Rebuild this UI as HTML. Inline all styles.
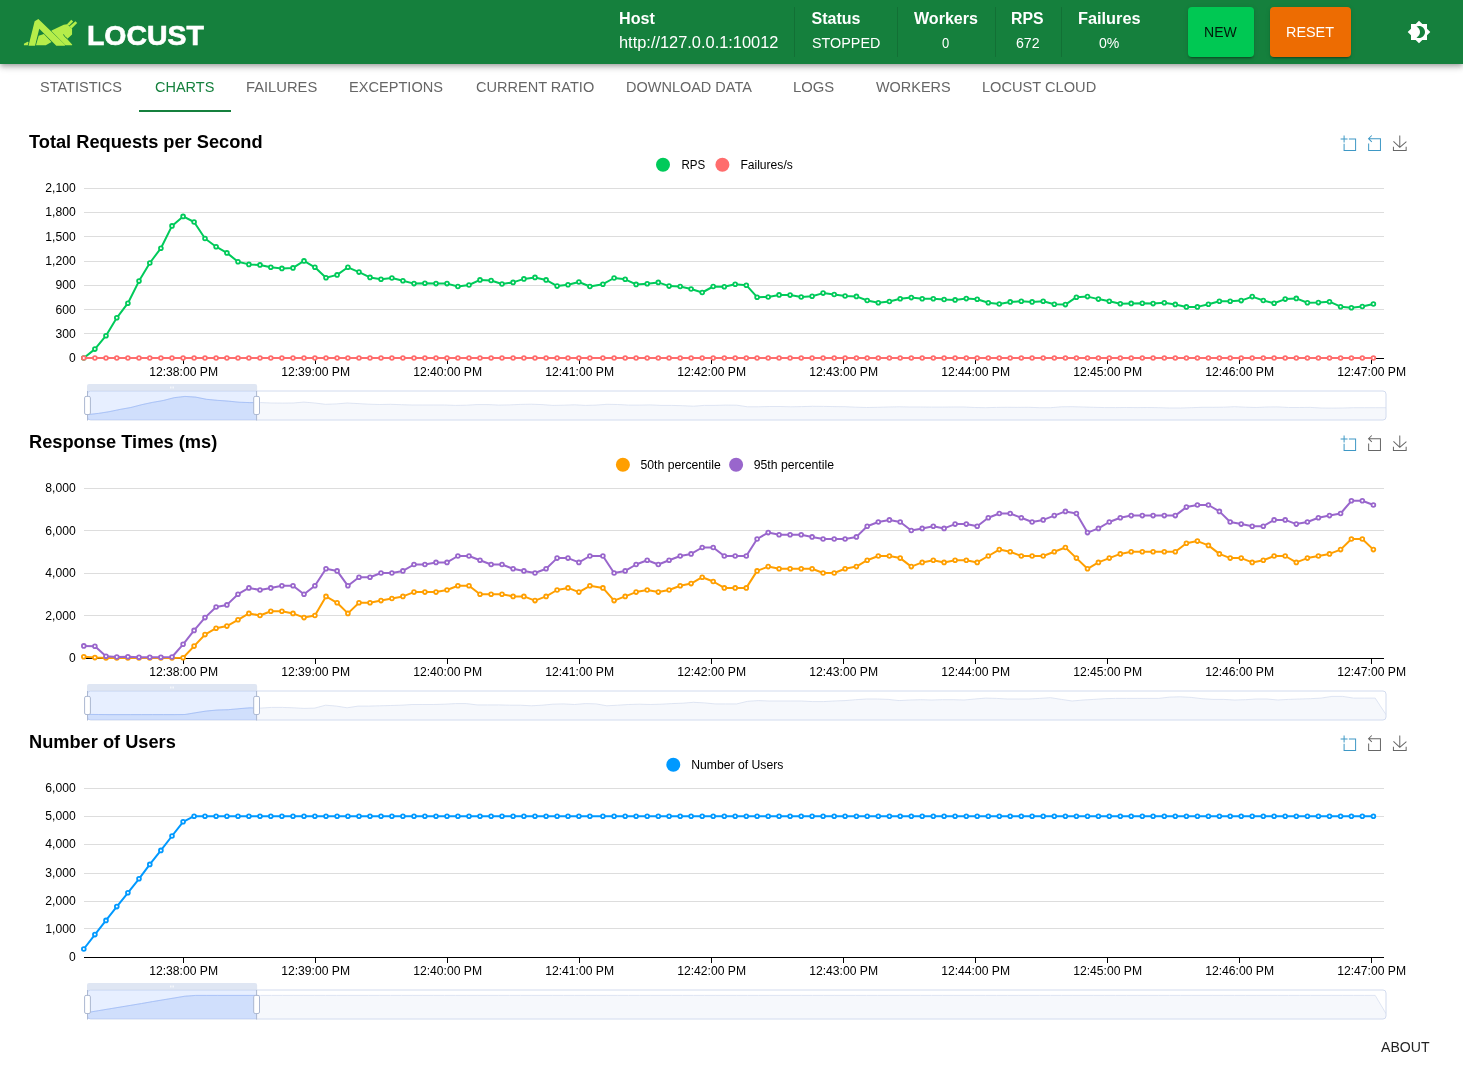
<!DOCTYPE html>
<html lang="en"><head><meta charset="utf-8"><title>Locust</title>
<style>
html,body{margin:0;padding:0;background:#fff;}
body{width:1463px;height:1068px;position:relative;overflow:hidden;font-family:"Liberation Sans", Arial, Helvetica, sans-serif;}
.t{position:absolute;white-space:nowrap;line-height:1;transform-origin:0 0;display:block;}
header{position:absolute;left:0;top:0;width:1463px;height:64px;background:#15803d;
 box-shadow:0 2px 4px -1px rgba(0,0,0,.2),0 4px 5px 0 rgba(0,0,0,.14),0 1px 10px 0 rgba(0,0,0,.12);}
.gl{position:absolute;left:0;top:0;width:1463px;height:1068px;will-change:transform;pointer-events:none;}
header .gl{height:64px;}
.dv{position:absolute;top:7px;width:1px;height:50px;background:rgba(0,0,0,.12);}
.btn{position:absolute;top:7px;height:50px;border-radius:4px;
 box-shadow:0 3px 1px -2px rgba(0,0,0,.2),0 2px 2px 0 rgba(0,0,0,.14),0 1px 5px 0 rgba(0,0,0,.12);}
nav .ind{position:absolute;left:139px;top:110px;width:92px;height:2px;background:#15803d;}
svg text{font-family:"Liberation Sans", Arial, Helvetica, sans-serif;}
</style></head>
<body>
<header>
<div class="gl">
<svg style="position:absolute;left:0;top:0" width="100" height="64" viewBox="0 0 100 64"><g fill="#b5ed4a"><path d="M23.94,43.83 L27.52,41.65 L28.57,42.00 L27.79,45.15 L23.94,45.15 Z"/><path d="M28.53,45.80 L34.65,21.35 L38.37,19.07 L65.28,44.97 L64.71,45.80 L56.31,45.80 L39.25,28.87 L35.09,45.80 Z"/><path d="M38.68,35.74 L43.84,34.04 L51.50,42.00 L45.81,45.15 L35.97,45.15 Z"/><path d="M51.58,30.62 L63.75,24.72 L67.03,24.19 L72.06,28.65 L72.06,34.56 L67.46,38.80 L65.71,37.40 L72.14,44.40 L72.14,45.15 L65.58,45.15 L51.58,31.37 Z"/><path d="M66.81,24.41 L71.27,19.82 L73.15,21.44 L69.00,25.72 Z"/><path d="M69.35,26.38 L75.47,21.35 L77.18,22.97 L71.71,28.52 Z"/></g><path d="M63.53,34.34 Q63.96,36.75 67.33,38.59" fill="none" stroke="#15803d" stroke-width="0.9"/></svg>
<span class="t" style="left:87.14px;top:22.51px;font-size:26.8px;font-weight:700;color:#fff;-webkit-text-stroke:0.6px #fff;transform:scaleX(1.0602)">LOCUST</span>
<span class="t" style="left:618.59px;top:11.36px;font-size:16px;font-weight:700;color:#fff;transform:scaleX(1.0078)">Host</span><span class="t" style="left:618.58px;top:35.16px;font-size:16px;font-weight:400;color:#fff;transform:scaleX(1.0240)">http://127.0.0.1:10012</span>
<div class="dv" style="left:794px"></div>
<span class="t" style="left:811.60px;top:11.36px;font-size:16px;font-weight:700;color:#fff;transform:scaleX(1.0000)">Status</span><span class="t" style="left:811.60px;top:35.95px;font-size:14px;font-weight:400;color:#fff;transform:scaleX(1.0249)">STOPPED</span>
<div class="dv" style="left:897px"></div>
<span class="t" style="left:914.20px;top:11.36px;font-size:16px;font-weight:700;color:#fff;transform:scaleX(1.0026)">Workers</span><span class="t" style="left:942.20px;top:35.95px;font-size:14px;font-weight:400;color:#fff;transform:scaleX(0.9250)">0</span>
<div class="dv" style="left:995px"></div>
<span class="t" style="left:1011.41px;top:11.36px;font-size:16px;font-weight:700;color:#fff;transform:scaleX(0.9868)">RPS</span><span class="t" style="left:1015.90px;top:35.95px;font-size:14px;font-weight:400;color:#fff;transform:scaleX(1.0097)">672</span>
<div class="dv" style="left:1061px"></div>
<span class="t" style="left:1077.58px;top:11.36px;font-size:16px;font-weight:700;color:#fff;transform:scaleX(1.0188)">Failures</span><span class="t" style="left:1098.70px;top:35.95px;font-size:14px;font-weight:400;color:#fff;transform:scaleX(1.0058)">0%</span>
<div class="btn" style="left:1188px;width:66px;background:#00c853"></div><span class="t" style="left:1204.00px;top:25.45px;font-size:14px;font-weight:400;color:rgba(0,0,0,0.87);transform:scaleX(1.0016)">NEW</span>
<div class="btn" style="left:1270px;width:81px;background:#ed6c02"></div><span class="t" style="left:1285.77px;top:25.45px;font-size:14px;font-weight:400;color:#fff;transform:scaleX(1.0277)">RESET</span>
<svg style="position:absolute;left:1407px;top:20px" width="24" height="24" viewBox="0 0 24 24"><path fill="#fff" d="M20 8.69V4h-4.690L12 .69 8.690 4H4v4.690L.69 12 4 15.310V20h4.690L12 23.310 15.310 20H20v-4.690L23.310 12 20 8.690zM12 18c-.89 0-1.740-.2-2.500-.55C11.560 16.500 13 14.420 13 12s-1.440-4.500-3.500-5.450C10.260 6.200 11.110 6 12 6c3.310 0 6 2.690 6 6s-2.690 6-6 6z"/></svg>
</div>
</header>
<nav class="gl">
<span class="t" style="left:40.20px;top:80.35px;font-size:14px;font-weight:400;color:#666;transform:scaleX(1.0385)">STATISTICS</span><span class="t" style="left:154.60px;top:80.35px;font-size:14px;font-weight:400;color:#15803d;transform:scaleX(1.0357)">CHARTS</span><span class="t" style="left:245.95px;top:80.35px;font-size:14px;font-weight:400;color:#666;transform:scaleX(1.0520)">FAILURES</span><span class="t" style="left:349.16px;top:80.35px;font-size:14px;font-weight:400;color:#666;transform:scaleX(1.0416)">EXCEPTIONS</span><span class="t" style="left:475.80px;top:80.35px;font-size:14px;font-weight:400;color:#666;transform:scaleX(1.0387)">CURRENT RATIO</span><span class="t" style="left:625.97px;top:80.35px;font-size:14px;font-weight:400;color:#666;transform:scaleX(1.0350)">DOWNLOAD DATA</span><span class="t" style="left:793.24px;top:80.35px;font-size:14px;font-weight:400;color:#666;transform:scaleX(1.0595)">LOGS</span><span class="t" style="left:875.80px;top:80.35px;font-size:14px;font-weight:400;color:#666;transform:scaleX(1.0306)">WORKERS</span><span class="t" style="left:981.96px;top:80.35px;font-size:14px;font-weight:400;color:#666;transform:scaleX(1.0435)">LOCUST CLOUD</span>
<div class="ind"></div>
</nav>
<main>
<svg style="position:absolute;left:0;top:0;will-change:transform" width="1463" height="1068" viewBox="0 0 1463 1068">
<g id="chart-rps">
<text x="29" y="147.6" font-size="18" font-weight="700" fill="#000" textLength="233.6" lengthAdjust="spacingAndGlyphs">Total Requests per Second</text>
<circle cx="663" cy="164.8" r="7" fill="#00ca5a"/>
<text x="681.40" y="169.1" font-size="12" fill="#000" textLength="23.80" lengthAdjust="spacingAndGlyphs">RPS</text>
<circle cx="722.4" cy="164.8" r="7" fill="#ff6d6d"/>
<text x="740.40" y="169.1" font-size="12" fill="#000" textLength="52.40" lengthAdjust="spacingAndGlyphs">Failures/s</text>
<path d="M0,13.5h26.9 M13.5,26.9V0 M32.1,13.5H58V58H13.5 V32.1" fill="none" stroke="#3e98c5" stroke-width="3.867" transform="translate(1340.60,135.50) scale(0.2586)"/>
<path d="M22,1.4L9.9,13.5l12.3,12.3 M10.3,13.5H54.9v44.6 H10.3v-26" fill="none" stroke="#3e98c5" stroke-width="3.780" transform="translate(1365.93,135.13) scale(0.2646)"/>
<path d="M4.7,22.9L29.3,45.5L54.7,23.4M4.6,43.6L4.6,58L53.8,58L53.8,43.6M29.2,45.1L29.2,0" fill="none" stroke="#666" stroke-width="3.867" transform="translate(1392.23,135.50) scale(0.2586)"/>
<g stroke="#ddd" stroke-width="1" shape-rendering="crispEdges">
<line x1="84" x2="1384" y1="333.5" y2="333.5"/>
<line x1="84" x2="1384" y1="309.5" y2="309.5"/>
<line x1="84" x2="1384" y1="285.5" y2="285.5"/>
<line x1="84" x2="1384" y1="261.5" y2="261.5"/>
<line x1="84" x2="1384" y1="236.5" y2="236.5"/>
<line x1="84" x2="1384" y1="212.5" y2="212.5"/>
<line x1="84" x2="1384" y1="188.5" y2="188.5"/>
</g>
<g stroke="#000" stroke-width="1" shape-rendering="crispEdges"><line x1="84" x2="1384" y1="358.5" y2="358.5"/>
<line x1="183.5" x2="183.5" y1="358.5" y2="363.5"/>
<line x1="315.5" x2="315.5" y1="358.5" y2="363.5"/>
<line x1="447.5" x2="447.5" y1="358.5" y2="363.5"/>
<line x1="579.5" x2="579.5" y1="358.5" y2="363.5"/>
<line x1="711.5" x2="711.5" y1="358.5" y2="363.5"/>
<line x1="843.5" x2="843.5" y1="358.5" y2="363.5"/>
<line x1="975.5" x2="975.5" y1="358.5" y2="363.5"/>
<line x1="1107.5" x2="1107.5" y1="358.5" y2="363.5"/>
<line x1="1239.5" x2="1239.5" y1="358.5" y2="363.5"/>
<line x1="1371.5" x2="1371.5" y1="358.5" y2="363.5"/>
</g>
<g font-size="12" fill="#000" text-anchor="end">
<text x="75.7" y="362.1" textLength="6.75" lengthAdjust="spacingAndGlyphs">0</text>
<text x="75.7" y="337.8" textLength="20.26" lengthAdjust="spacingAndGlyphs">300</text>
<text x="75.7" y="313.5" textLength="20.26" lengthAdjust="spacingAndGlyphs">600</text>
<text x="75.7" y="289.2" textLength="20.26" lengthAdjust="spacingAndGlyphs">900</text>
<text x="75.7" y="265.0" textLength="30.39" lengthAdjust="spacingAndGlyphs">1,200</text>
<text x="75.7" y="240.7" textLength="30.39" lengthAdjust="spacingAndGlyphs">1,500</text>
<text x="75.7" y="216.4" textLength="30.39" lengthAdjust="spacingAndGlyphs">1,800</text>
<text x="75.7" y="192.1" textLength="30.39" lengthAdjust="spacingAndGlyphs">2,100</text>
</g>
<g font-size="12" fill="#000" text-anchor="middle">
<text x="183.6" y="375.9" textLength="68.86" lengthAdjust="spacingAndGlyphs">12:38:00 PM</text>
<text x="315.6" y="375.9" textLength="68.86" lengthAdjust="spacingAndGlyphs">12:39:00 PM</text>
<text x="447.6" y="375.9" textLength="68.86" lengthAdjust="spacingAndGlyphs">12:40:00 PM</text>
<text x="579.6" y="375.9" textLength="68.86" lengthAdjust="spacingAndGlyphs">12:41:00 PM</text>
<text x="711.6" y="375.9" textLength="68.86" lengthAdjust="spacingAndGlyphs">12:42:00 PM</text>
<text x="843.6" y="375.9" textLength="68.86" lengthAdjust="spacingAndGlyphs">12:43:00 PM</text>
<text x="975.6" y="375.9" textLength="68.86" lengthAdjust="spacingAndGlyphs">12:44:00 PM</text>
<text x="1107.6" y="375.9" textLength="68.86" lengthAdjust="spacingAndGlyphs">12:45:00 PM</text>
<text x="1239.6" y="375.9" textLength="68.86" lengthAdjust="spacingAndGlyphs">12:46:00 PM</text>
<text x="1371.6" y="375.9" textLength="68.86" lengthAdjust="spacingAndGlyphs">12:47:00 PM</text>
</g>
<polyline fill="none" stroke="#00ca5a" stroke-width="2" stroke-linejoin="bevel" points="83.8,358.0 94.9,349.1 106.0,335.7 116.8,317.8 127.9,303.2 139.0,281.1 149.8,263.0 160.9,248.2 172.0,225.9 183.1,216.4 194.1,222.0 205.0,238.5 216.1,246.7 226.9,252.9 238.0,261.8 248.9,264.4 260.0,264.9 270.8,267.3 281.9,268.4 293.0,267.9 304.0,260.9 314.9,267.3 326.0,277.8 337.1,274.9 347.9,267.3 359.0,272.1 370.0,277.4 381.0,279.3 391.9,278.0 402.9,280.7 414.0,283.6 424.9,283.2 436.0,283.6 447.0,283.6 457.9,286.5 469.0,285.0 480.0,279.9 491.1,280.5 502.0,284.0 513.1,282.4 523.9,278.9 535.0,277.4 546.1,279.9 557.1,286.1 568.0,284.8 578.9,282.0 589.9,286.5 602.9,284.2 614.1,278.0 625.2,279.3 636.1,284.4 647.2,283.8 658.3,282.4 669.1,286.1 680.2,286.5 691.1,289.0 702.2,292.5 713.2,286.5 724.3,286.7 735.2,284.2 746.3,285.2 757.1,297.2 768.2,297.0 779.1,294.9 790.1,295.1 801.2,297.0 812.1,296.2 823.1,293.1 834.2,294.5 845.1,296.0 856.4,296.4 867.2,300.5 878.3,302.8 889.4,301.5 900.2,298.8 911.3,297.6 922.2,298.8 933.3,298.8 944.1,299.5 955.1,299.9 966.3,298.6 977.2,299.3 988.3,302.8 999.3,304.0 1010.2,301.9 1021.3,301.3 1032.1,301.9 1043.2,301.3 1054.3,304.2 1065.4,304.6 1076.4,297.2 1087.5,296.6 1098.4,299.1 1109.3,301.3 1120.3,303.8 1131.2,303.4 1142.3,303.2 1153.1,303.6 1164.3,302.8 1175.3,304.4 1186.4,306.9 1197.4,306.9 1208.4,304.2 1219.4,301.3 1230.2,301.3 1241.2,300.6 1252.2,296.6 1263.3,300.5 1274.1,303.2 1285.2,299.1 1296.3,298.4 1307.4,302.8 1318.4,302.6 1329.5,301.7 1340.6,306.7 1351.4,307.7 1362.3,306.5 1373.4,304.0"/>
<g fill="#fff" stroke="#00ca5a" stroke-width="1.8">
<circle cx="83.8" cy="358.0" r="1.9"/><circle cx="94.9" cy="349.1" r="1.9"/><circle cx="106.0" cy="335.7" r="1.9"/><circle cx="116.8" cy="317.8" r="1.9"/><circle cx="127.9" cy="303.2" r="1.9"/><circle cx="139.0" cy="281.1" r="1.9"/><circle cx="149.8" cy="263.0" r="1.9"/><circle cx="160.9" cy="248.2" r="1.9"/><circle cx="172.0" cy="225.9" r="1.9"/><circle cx="183.1" cy="216.4" r="1.9"/><circle cx="194.1" cy="222.0" r="1.9"/><circle cx="205.0" cy="238.5" r="1.9"/><circle cx="216.1" cy="246.7" r="1.9"/><circle cx="226.9" cy="252.9" r="1.9"/><circle cx="238.0" cy="261.8" r="1.9"/><circle cx="248.9" cy="264.4" r="1.9"/><circle cx="260.0" cy="264.9" r="1.9"/><circle cx="270.8" cy="267.3" r="1.9"/><circle cx="281.9" cy="268.4" r="1.9"/><circle cx="293.0" cy="267.9" r="1.9"/><circle cx="304.0" cy="260.9" r="1.9"/><circle cx="314.9" cy="267.3" r="1.9"/><circle cx="326.0" cy="277.8" r="1.9"/><circle cx="337.1" cy="274.9" r="1.9"/><circle cx="347.9" cy="267.3" r="1.9"/><circle cx="359.0" cy="272.1" r="1.9"/><circle cx="370.0" cy="277.4" r="1.9"/><circle cx="381.0" cy="279.3" r="1.9"/><circle cx="391.9" cy="278.0" r="1.9"/><circle cx="402.9" cy="280.7" r="1.9"/><circle cx="414.0" cy="283.6" r="1.9"/><circle cx="424.9" cy="283.2" r="1.9"/><circle cx="436.0" cy="283.6" r="1.9"/><circle cx="447.0" cy="283.6" r="1.9"/><circle cx="457.9" cy="286.5" r="1.9"/><circle cx="469.0" cy="285.0" r="1.9"/><circle cx="480.0" cy="279.9" r="1.9"/><circle cx="491.1" cy="280.5" r="1.9"/><circle cx="502.0" cy="284.0" r="1.9"/><circle cx="513.1" cy="282.4" r="1.9"/><circle cx="523.9" cy="278.9" r="1.9"/><circle cx="535.0" cy="277.4" r="1.9"/><circle cx="546.1" cy="279.9" r="1.9"/><circle cx="557.1" cy="286.1" r="1.9"/><circle cx="568.0" cy="284.8" r="1.9"/><circle cx="578.9" cy="282.0" r="1.9"/><circle cx="589.9" cy="286.5" r="1.9"/><circle cx="602.9" cy="284.2" r="1.9"/><circle cx="614.1" cy="278.0" r="1.9"/><circle cx="625.2" cy="279.3" r="1.9"/><circle cx="636.1" cy="284.4" r="1.9"/><circle cx="647.2" cy="283.8" r="1.9"/><circle cx="658.3" cy="282.4" r="1.9"/><circle cx="669.1" cy="286.1" r="1.9"/><circle cx="680.2" cy="286.5" r="1.9"/><circle cx="691.1" cy="289.0" r="1.9"/><circle cx="702.2" cy="292.5" r="1.9"/><circle cx="713.2" cy="286.5" r="1.9"/><circle cx="724.3" cy="286.7" r="1.9"/><circle cx="735.2" cy="284.2" r="1.9"/><circle cx="746.3" cy="285.2" r="1.9"/><circle cx="757.1" cy="297.2" r="1.9"/><circle cx="768.2" cy="297.0" r="1.9"/><circle cx="779.1" cy="294.9" r="1.9"/><circle cx="790.1" cy="295.1" r="1.9"/><circle cx="801.2" cy="297.0" r="1.9"/><circle cx="812.1" cy="296.2" r="1.9"/><circle cx="823.1" cy="293.1" r="1.9"/><circle cx="834.2" cy="294.5" r="1.9"/><circle cx="845.1" cy="296.0" r="1.9"/><circle cx="856.4" cy="296.4" r="1.9"/><circle cx="867.2" cy="300.5" r="1.9"/><circle cx="878.3" cy="302.8" r="1.9"/><circle cx="889.4" cy="301.5" r="1.9"/><circle cx="900.2" cy="298.8" r="1.9"/><circle cx="911.3" cy="297.6" r="1.9"/><circle cx="922.2" cy="298.8" r="1.9"/><circle cx="933.3" cy="298.8" r="1.9"/><circle cx="944.1" cy="299.5" r="1.9"/><circle cx="955.1" cy="299.9" r="1.9"/><circle cx="966.3" cy="298.6" r="1.9"/><circle cx="977.2" cy="299.3" r="1.9"/><circle cx="988.3" cy="302.8" r="1.9"/><circle cx="999.3" cy="304.0" r="1.9"/><circle cx="1010.2" cy="301.9" r="1.9"/><circle cx="1021.3" cy="301.3" r="1.9"/><circle cx="1032.1" cy="301.9" r="1.9"/><circle cx="1043.2" cy="301.3" r="1.9"/><circle cx="1054.3" cy="304.2" r="1.9"/><circle cx="1065.4" cy="304.6" r="1.9"/><circle cx="1076.4" cy="297.2" r="1.9"/><circle cx="1087.5" cy="296.6" r="1.9"/><circle cx="1098.4" cy="299.1" r="1.9"/><circle cx="1109.3" cy="301.3" r="1.9"/><circle cx="1120.3" cy="303.8" r="1.9"/><circle cx="1131.2" cy="303.4" r="1.9"/><circle cx="1142.3" cy="303.2" r="1.9"/><circle cx="1153.1" cy="303.6" r="1.9"/><circle cx="1164.3" cy="302.8" r="1.9"/><circle cx="1175.3" cy="304.4" r="1.9"/><circle cx="1186.4" cy="306.9" r="1.9"/><circle cx="1197.4" cy="306.9" r="1.9"/><circle cx="1208.4" cy="304.2" r="1.9"/><circle cx="1219.4" cy="301.3" r="1.9"/><circle cx="1230.2" cy="301.3" r="1.9"/><circle cx="1241.2" cy="300.6" r="1.9"/><circle cx="1252.2" cy="296.6" r="1.9"/><circle cx="1263.3" cy="300.5" r="1.9"/><circle cx="1274.1" cy="303.2" r="1.9"/><circle cx="1285.2" cy="299.1" r="1.9"/><circle cx="1296.3" cy="298.4" r="1.9"/><circle cx="1307.4" cy="302.8" r="1.9"/><circle cx="1318.4" cy="302.6" r="1.9"/><circle cx="1329.5" cy="301.7" r="1.9"/><circle cx="1340.6" cy="306.7" r="1.9"/><circle cx="1351.4" cy="307.7" r="1.9"/><circle cx="1362.3" cy="306.5" r="1.9"/><circle cx="1373.4" cy="304.0" r="1.9"/>
</g>
<polyline fill="none" stroke="#ff6d6d" stroke-width="2" stroke-linejoin="bevel" points="83.8,358.0 94.9,358.0 106.0,358.0 116.8,358.0 127.9,358.0 139.0,358.0 149.8,358.0 160.9,358.0 172.0,358.0 183.1,358.0 194.1,358.0 205.0,358.0 216.1,358.0 226.9,358.0 238.0,358.0 248.9,358.0 260.0,358.0 270.8,358.0 281.9,358.0 293.0,358.0 304.0,358.0 314.9,358.0 326.0,358.0 337.1,358.0 347.9,358.0 359.0,358.0 370.0,358.0 381.0,358.0 391.9,358.0 402.9,358.0 414.0,358.0 424.9,358.0 436.0,358.0 447.0,358.0 457.9,358.0 469.0,358.0 480.0,358.0 491.1,358.0 502.0,358.0 513.1,358.0 523.9,358.0 535.0,358.0 546.1,358.0 557.1,358.0 568.0,358.0 578.9,358.0 589.9,358.0 602.9,358.0 614.1,358.0 625.2,358.0 636.1,358.0 647.2,358.0 658.3,358.0 669.1,358.0 680.2,358.0 691.1,358.0 702.2,358.0 713.2,358.0 724.3,358.0 735.2,358.0 746.3,358.0 757.1,358.0 768.2,358.0 779.1,358.0 790.1,358.0 801.2,358.0 812.1,358.0 823.1,358.0 834.2,358.0 845.1,358.0 856.4,358.0 867.2,358.0 878.3,358.0 889.4,358.0 900.2,358.0 911.3,358.0 922.2,358.0 933.3,358.0 944.1,358.0 955.1,358.0 966.3,358.0 977.2,358.0 988.3,358.0 999.3,358.0 1010.2,358.0 1021.3,358.0 1032.1,358.0 1043.2,358.0 1054.3,358.0 1065.4,358.0 1076.4,358.0 1087.5,358.0 1098.4,358.0 1109.3,358.0 1120.3,358.0 1131.2,358.0 1142.3,358.0 1153.1,358.0 1164.3,358.0 1175.3,358.0 1186.4,358.0 1197.4,358.0 1208.4,358.0 1219.4,358.0 1230.2,358.0 1241.2,358.0 1252.2,358.0 1263.3,358.0 1274.1,358.0 1285.2,358.0 1296.3,358.0 1307.4,358.0 1318.4,358.0 1329.5,358.0 1340.6,358.0 1351.4,358.0 1362.3,358.0 1373.4,358.0"/>
<g fill="#fff" stroke="#ff6d6d" stroke-width="1.8">
<circle cx="83.8" cy="358.0" r="1.9"/><circle cx="94.9" cy="358.0" r="1.9"/><circle cx="106.0" cy="358.0" r="1.9"/><circle cx="116.8" cy="358.0" r="1.9"/><circle cx="127.9" cy="358.0" r="1.9"/><circle cx="139.0" cy="358.0" r="1.9"/><circle cx="149.8" cy="358.0" r="1.9"/><circle cx="160.9" cy="358.0" r="1.9"/><circle cx="172.0" cy="358.0" r="1.9"/><circle cx="183.1" cy="358.0" r="1.9"/><circle cx="194.1" cy="358.0" r="1.9"/><circle cx="205.0" cy="358.0" r="1.9"/><circle cx="216.1" cy="358.0" r="1.9"/><circle cx="226.9" cy="358.0" r="1.9"/><circle cx="238.0" cy="358.0" r="1.9"/><circle cx="248.9" cy="358.0" r="1.9"/><circle cx="260.0" cy="358.0" r="1.9"/><circle cx="270.8" cy="358.0" r="1.9"/><circle cx="281.9" cy="358.0" r="1.9"/><circle cx="293.0" cy="358.0" r="1.9"/><circle cx="304.0" cy="358.0" r="1.9"/><circle cx="314.9" cy="358.0" r="1.9"/><circle cx="326.0" cy="358.0" r="1.9"/><circle cx="337.1" cy="358.0" r="1.9"/><circle cx="347.9" cy="358.0" r="1.9"/><circle cx="359.0" cy="358.0" r="1.9"/><circle cx="370.0" cy="358.0" r="1.9"/><circle cx="381.0" cy="358.0" r="1.9"/><circle cx="391.9" cy="358.0" r="1.9"/><circle cx="402.9" cy="358.0" r="1.9"/><circle cx="414.0" cy="358.0" r="1.9"/><circle cx="424.9" cy="358.0" r="1.9"/><circle cx="436.0" cy="358.0" r="1.9"/><circle cx="447.0" cy="358.0" r="1.9"/><circle cx="457.9" cy="358.0" r="1.9"/><circle cx="469.0" cy="358.0" r="1.9"/><circle cx="480.0" cy="358.0" r="1.9"/><circle cx="491.1" cy="358.0" r="1.9"/><circle cx="502.0" cy="358.0" r="1.9"/><circle cx="513.1" cy="358.0" r="1.9"/><circle cx="523.9" cy="358.0" r="1.9"/><circle cx="535.0" cy="358.0" r="1.9"/><circle cx="546.1" cy="358.0" r="1.9"/><circle cx="557.1" cy="358.0" r="1.9"/><circle cx="568.0" cy="358.0" r="1.9"/><circle cx="578.9" cy="358.0" r="1.9"/><circle cx="589.9" cy="358.0" r="1.9"/><circle cx="602.9" cy="358.0" r="1.9"/><circle cx="614.1" cy="358.0" r="1.9"/><circle cx="625.2" cy="358.0" r="1.9"/><circle cx="636.1" cy="358.0" r="1.9"/><circle cx="647.2" cy="358.0" r="1.9"/><circle cx="658.3" cy="358.0" r="1.9"/><circle cx="669.1" cy="358.0" r="1.9"/><circle cx="680.2" cy="358.0" r="1.9"/><circle cx="691.1" cy="358.0" r="1.9"/><circle cx="702.2" cy="358.0" r="1.9"/><circle cx="713.2" cy="358.0" r="1.9"/><circle cx="724.3" cy="358.0" r="1.9"/><circle cx="735.2" cy="358.0" r="1.9"/><circle cx="746.3" cy="358.0" r="1.9"/><circle cx="757.1" cy="358.0" r="1.9"/><circle cx="768.2" cy="358.0" r="1.9"/><circle cx="779.1" cy="358.0" r="1.9"/><circle cx="790.1" cy="358.0" r="1.9"/><circle cx="801.2" cy="358.0" r="1.9"/><circle cx="812.1" cy="358.0" r="1.9"/><circle cx="823.1" cy="358.0" r="1.9"/><circle cx="834.2" cy="358.0" r="1.9"/><circle cx="845.1" cy="358.0" r="1.9"/><circle cx="856.4" cy="358.0" r="1.9"/><circle cx="867.2" cy="358.0" r="1.9"/><circle cx="878.3" cy="358.0" r="1.9"/><circle cx="889.4" cy="358.0" r="1.9"/><circle cx="900.2" cy="358.0" r="1.9"/><circle cx="911.3" cy="358.0" r="1.9"/><circle cx="922.2" cy="358.0" r="1.9"/><circle cx="933.3" cy="358.0" r="1.9"/><circle cx="944.1" cy="358.0" r="1.9"/><circle cx="955.1" cy="358.0" r="1.9"/><circle cx="966.3" cy="358.0" r="1.9"/><circle cx="977.2" cy="358.0" r="1.9"/><circle cx="988.3" cy="358.0" r="1.9"/><circle cx="999.3" cy="358.0" r="1.9"/><circle cx="1010.2" cy="358.0" r="1.9"/><circle cx="1021.3" cy="358.0" r="1.9"/><circle cx="1032.1" cy="358.0" r="1.9"/><circle cx="1043.2" cy="358.0" r="1.9"/><circle cx="1054.3" cy="358.0" r="1.9"/><circle cx="1065.4" cy="358.0" r="1.9"/><circle cx="1076.4" cy="358.0" r="1.9"/><circle cx="1087.5" cy="358.0" r="1.9"/><circle cx="1098.4" cy="358.0" r="1.9"/><circle cx="1109.3" cy="358.0" r="1.9"/><circle cx="1120.3" cy="358.0" r="1.9"/><circle cx="1131.2" cy="358.0" r="1.9"/><circle cx="1142.3" cy="358.0" r="1.9"/><circle cx="1153.1" cy="358.0" r="1.9"/><circle cx="1164.3" cy="358.0" r="1.9"/><circle cx="1175.3" cy="358.0" r="1.9"/><circle cx="1186.4" cy="358.0" r="1.9"/><circle cx="1197.4" cy="358.0" r="1.9"/><circle cx="1208.4" cy="358.0" r="1.9"/><circle cx="1219.4" cy="358.0" r="1.9"/><circle cx="1230.2" cy="358.0" r="1.9"/><circle cx="1241.2" cy="358.0" r="1.9"/><circle cx="1252.2" cy="358.0" r="1.9"/><circle cx="1263.3" cy="358.0" r="1.9"/><circle cx="1274.1" cy="358.0" r="1.9"/><circle cx="1285.2" cy="358.0" r="1.9"/><circle cx="1296.3" cy="358.0" r="1.9"/><circle cx="1307.4" cy="358.0" r="1.9"/><circle cx="1318.4" cy="358.0" r="1.9"/><circle cx="1329.5" cy="358.0" r="1.9"/><circle cx="1340.6" cy="358.0" r="1.9"/><circle cx="1351.4" cy="358.0" r="1.9"/><circle cx="1362.3" cy="358.0" r="1.9"/><circle cx="1373.4" cy="358.0" r="1.9"/>
</g>
<clipPath id="c128"><rect x="87.5" y="391" width="169.10000000000002" height="29"/></clipPath>
<clipPath id="c128b"><rect x="87.5" y="391" width="1298.5" height="29" rx="3"/></clipPath>
<g clip-path="url(#c128b)"><polygon points="87.5,420 87.5,414.6 98.3,413.4 109.1,411.7 120.0,409.4 130.8,407.5 141.6,404.7 152.4,402.4 163.2,400.5 174.1,397.7 184.9,396.4 195.7,397.1 206.5,399.3 217.3,400.3 228.2,401.1 239.0,402.2 249.8,402.6 260.6,402.6 271.5,403.0 282.3,403.1 293.1,403.0 303.9,402.1 314.7,403.0 325.6,404.3 336.4,403.9 347.2,403.0 358.0,403.6 368.8,404.2 379.7,404.5 390.5,404.3 401.3,404.7 412.1,405.0 422.9,405.0 433.8,405.0 444.6,405.0 455.4,405.4 466.2,405.2 477.1,404.6 487.9,404.6 498.7,405.1 509.5,404.9 520.3,404.4 531.2,404.2 542.0,404.6 552.8,405.4 563.6,405.2 574.4,404.8 585.3,405.4 596.1,405.1 606.9,404.3 617.7,404.5 628.5,405.1 639.4,405.1 650.2,404.9 661.0,405.4 671.8,405.4 682.6,405.7 693.5,406.2 704.3,405.4 715.1,405.4 725.9,405.1 736.8,405.2 747.6,406.8 758.4,406.8 769.2,406.5 780.0,406.5 790.9,406.8 801.7,406.6 812.5,406.3 823.3,406.4 834.1,406.6 845.0,406.7 855.8,407.2 866.6,407.5 877.4,407.3 888.2,407.0 899.1,406.8 909.9,407.0 920.7,407.0 931.5,407.1 942.3,407.1 953.2,407.0 964.0,407.0 974.8,407.5 985.6,407.7 996.5,407.4 1007.3,407.3 1018.1,407.4 1028.9,407.3 1039.7,407.7 1050.6,407.7 1061.4,406.8 1072.2,406.7 1083.0,407.0 1093.8,407.3 1104.7,407.6 1115.5,407.6 1126.3,407.5 1137.1,407.6 1147.9,407.5 1158.8,407.7 1169.6,408.0 1180.4,408.0 1191.2,407.7 1202.0,407.3 1212.9,407.3 1223.7,407.2 1234.5,406.7 1245.3,407.2 1256.2,407.5 1267.0,407.0 1277.8,406.9 1288.6,407.5 1299.4,407.5 1310.3,407.4 1321.1,408.0 1331.9,408.1 1342.7,408.0 1353.5,407.7 1364.4,407.7 1375.2,407.7 1386.0,407.7 1386.0,420" fill="#d2dbee" fill-opacity="0.2"/><polyline points="87.5,414.6 98.3,413.4 109.1,411.7 120.0,409.4 130.8,407.5 141.6,404.7 152.4,402.4 163.2,400.5 174.1,397.7 184.9,396.4 195.7,397.1 206.5,399.3 217.3,400.3 228.2,401.1 239.0,402.2 249.8,402.6 260.6,402.6 271.5,403.0 282.3,403.1 293.1,403.0 303.9,402.1 314.7,403.0 325.6,404.3 336.4,403.9 347.2,403.0 358.0,403.6 368.8,404.2 379.7,404.5 390.5,404.3 401.3,404.7 412.1,405.0 422.9,405.0 433.8,405.0 444.6,405.0 455.4,405.4 466.2,405.2 477.1,404.6 487.9,404.6 498.7,405.1 509.5,404.9 520.3,404.4 531.2,404.2 542.0,404.6 552.8,405.4 563.6,405.2 574.4,404.8 585.3,405.4 596.1,405.1 606.9,404.3 617.7,404.5 628.5,405.1 639.4,405.1 650.2,404.9 661.0,405.4 671.8,405.4 682.6,405.7 693.5,406.2 704.3,405.4 715.1,405.4 725.9,405.1 736.8,405.2 747.6,406.8 758.4,406.8 769.2,406.5 780.0,406.5 790.9,406.8 801.7,406.6 812.5,406.3 823.3,406.4 834.1,406.6 845.0,406.7 855.8,407.2 866.6,407.5 877.4,407.3 888.2,407.0 899.1,406.8 909.9,407.0 920.7,407.0 931.5,407.1 942.3,407.1 953.2,407.0 964.0,407.0 974.8,407.5 985.6,407.7 996.5,407.4 1007.3,407.3 1018.1,407.4 1028.9,407.3 1039.7,407.7 1050.6,407.7 1061.4,406.8 1072.2,406.7 1083.0,407.0 1093.8,407.3 1104.7,407.6 1115.5,407.6 1126.3,407.5 1137.1,407.6 1147.9,407.5 1158.8,407.7 1169.6,408.0 1180.4,408.0 1191.2,407.7 1202.0,407.3 1212.9,407.3 1223.7,407.2 1234.5,406.7 1245.3,407.2 1256.2,407.5 1267.0,407.0 1277.8,406.9 1288.6,407.5 1299.4,407.5 1310.3,407.4 1321.1,408.0 1331.9,408.1 1342.7,408.0 1353.5,407.7 1364.4,407.7 1375.2,407.7 1386.0,407.7" fill="none" stroke="#d2dbee" stroke-width="0.7"/></g>
<rect x="87.5" y="391" width="1298.5" height="29" rx="3" fill="none" stroke="#d2dbee"/>
<g clip-path="url(#c128)"><polygon points="87.5,420 87.5,414.6 98.3,413.4 109.1,411.7 120.0,409.4 130.8,407.5 141.6,404.7 152.4,402.4 163.2,400.5 174.1,397.7 184.9,396.4 195.7,397.1 206.5,399.3 217.3,400.3 228.2,401.1 239.0,402.2 249.8,402.6 260.6,402.6 271.5,403.0 282.3,403.1 293.1,403.0 303.9,402.1 314.7,403.0 325.6,404.3 336.4,403.9 347.2,403.0 358.0,403.6 368.8,404.2 379.7,404.5 390.5,404.3 401.3,404.7 412.1,405.0 422.9,405.0 433.8,405.0 444.6,405.0 455.4,405.4 466.2,405.2 477.1,404.6 487.9,404.6 498.7,405.1 509.5,404.9 520.3,404.4 531.2,404.2 542.0,404.6 552.8,405.4 563.6,405.2 574.4,404.8 585.3,405.4 596.1,405.1 606.9,404.3 617.7,404.5 628.5,405.1 639.4,405.1 650.2,404.9 661.0,405.4 671.8,405.4 682.6,405.7 693.5,406.2 704.3,405.4 715.1,405.4 725.9,405.1 736.8,405.2 747.6,406.8 758.4,406.8 769.2,406.5 780.0,406.5 790.9,406.8 801.7,406.6 812.5,406.3 823.3,406.4 834.1,406.6 845.0,406.7 855.8,407.2 866.6,407.5 877.4,407.3 888.2,407.0 899.1,406.8 909.9,407.0 920.7,407.0 931.5,407.1 942.3,407.1 953.2,407.0 964.0,407.0 974.8,407.5 985.6,407.7 996.5,407.4 1007.3,407.3 1018.1,407.4 1028.9,407.3 1039.7,407.7 1050.6,407.7 1061.4,406.8 1072.2,406.7 1083.0,407.0 1093.8,407.3 1104.7,407.6 1115.5,407.6 1126.3,407.5 1137.1,407.6 1147.9,407.5 1158.8,407.7 1169.6,408.0 1180.4,408.0 1191.2,407.7 1202.0,407.3 1212.9,407.3 1223.7,407.2 1234.5,406.7 1245.3,407.2 1256.2,407.5 1267.0,407.0 1277.8,406.9 1288.6,407.5 1299.4,407.5 1310.3,407.4 1321.1,408.0 1331.9,408.1 1342.7,408.0 1353.5,407.7 1364.4,407.7 1375.2,407.7 1386.0,407.7 1386.0,420" fill="#8fb0f7" fill-opacity="0.2"/><polyline points="87.5,414.6 98.3,413.4 109.1,411.7 120.0,409.4 130.8,407.5 141.6,404.7 152.4,402.4 163.2,400.5 174.1,397.7 184.9,396.4 195.7,397.1 206.5,399.3 217.3,400.3 228.2,401.1 239.0,402.2 249.8,402.6 260.6,402.6 271.5,403.0 282.3,403.1 293.1,403.0 303.9,402.1 314.7,403.0 325.6,404.3 336.4,403.9 347.2,403.0 358.0,403.6 368.8,404.2 379.7,404.5 390.5,404.3 401.3,404.7 412.1,405.0 422.9,405.0 433.8,405.0 444.6,405.0 455.4,405.4 466.2,405.2 477.1,404.6 487.9,404.6 498.7,405.1 509.5,404.9 520.3,404.4 531.2,404.2 542.0,404.6 552.8,405.4 563.6,405.2 574.4,404.8 585.3,405.4 596.1,405.1 606.9,404.3 617.7,404.5 628.5,405.1 639.4,405.1 650.2,404.9 661.0,405.4 671.8,405.4 682.6,405.7 693.5,406.2 704.3,405.4 715.1,405.4 725.9,405.1 736.8,405.2 747.6,406.8 758.4,406.8 769.2,406.5 780.0,406.5 790.9,406.8 801.7,406.6 812.5,406.3 823.3,406.4 834.1,406.6 845.0,406.7 855.8,407.2 866.6,407.5 877.4,407.3 888.2,407.0 899.1,406.8 909.9,407.0 920.7,407.0 931.5,407.1 942.3,407.1 953.2,407.0 964.0,407.0 974.8,407.5 985.6,407.7 996.5,407.4 1007.3,407.3 1018.1,407.4 1028.9,407.3 1039.7,407.7 1050.6,407.7 1061.4,406.8 1072.2,406.7 1083.0,407.0 1093.8,407.3 1104.7,407.6 1115.5,407.6 1126.3,407.5 1137.1,407.6 1147.9,407.5 1158.8,407.7 1169.6,408.0 1180.4,408.0 1191.2,407.7 1202.0,407.3 1212.9,407.3 1223.7,407.2 1234.5,406.7 1245.3,407.2 1256.2,407.5 1267.0,407.0 1277.8,406.9 1288.6,407.5 1299.4,407.5 1310.3,407.4 1321.1,408.0 1331.9,408.1 1342.7,408.0 1353.5,407.7 1364.4,407.7 1375.2,407.7 1386.0,407.7" fill="none" stroke="#8fb0f7" stroke-width="0.5"/></g>
<rect x="87.5" y="391" width="169.10000000000002" height="29" fill="rgb(135,175,255)" fill-opacity="0.2"/>
<path d="M87.0,391 v-5 a2,2 0 0 1 2,-2 h166.10000000000002 a2,2 0 0 1 2,2 v5 z" fill="#d2dbee" fill-opacity="0.7"/>
<g stroke="#fff" stroke-width="0.8" opacity="0.9"><line x1="170.55" x2="170.55" y1="386.5" y2="388.5"/><line x1="172.05" x2="172.05" y1="386.5" y2="388.5"/><line x1="173.55" x2="173.55" y1="386.5" y2="388.5"/></g>
<g stroke="#acb8d1" stroke-width="1"><line x1="87.5" x2="87.5" y1="391" y2="420.5"/><rect x="84.6" y="396.4" width="5.8" height="18.1" rx="1.45" fill="#fff"/></g>
<g stroke="#acb8d1" stroke-width="1"><line x1="256.6" x2="256.6" y1="391" y2="420.5"/><rect x="253.70000000000002" y="396.4" width="5.8" height="18.1" rx="1.45" fill="#fff"/></g>
</g>
<g id="chart-rt">
<text x="29" y="447.6" font-size="18" font-weight="700" fill="#000" textLength="188.3" lengthAdjust="spacingAndGlyphs">Response Times (ms)</text>
<circle cx="622.9" cy="464.8" r="7" fill="#ff9f00"/>
<text x="640.50" y="469.1" font-size="12" fill="#000" textLength="80.27" lengthAdjust="spacingAndGlyphs">50th percentile</text>
<circle cx="736.1" cy="464.8" r="7" fill="#9966cc"/>
<text x="753.70" y="469.1" font-size="12" fill="#000" textLength="80.27" lengthAdjust="spacingAndGlyphs">95th percentile</text>
<path d="M0,13.5h26.9 M13.5,26.9V0 M32.1,13.5H58V58H13.5 V32.1" fill="none" stroke="#3e98c5" stroke-width="3.867" transform="translate(1340.60,435.50) scale(0.2586)"/>
<path d="M22,1.4L9.9,13.5l12.3,12.3 M10.3,13.5H54.9v44.6 H10.3v-26" fill="none" stroke="#666" stroke-width="3.780" transform="translate(1365.93,435.13) scale(0.2646)"/>
<path d="M4.7,22.9L29.3,45.5L54.7,23.4M4.6,43.6L4.6,58L53.8,58L53.8,43.6M29.2,45.1L29.2,0" fill="none" stroke="#666" stroke-width="3.867" transform="translate(1392.23,435.50) scale(0.2586)"/>
<g stroke="#ddd" stroke-width="1" shape-rendering="crispEdges">
<line x1="84" x2="1384" y1="615.5" y2="615.5"/>
<line x1="84" x2="1384" y1="573.5" y2="573.5"/>
<line x1="84" x2="1384" y1="530.5" y2="530.5"/>
<line x1="84" x2="1384" y1="488.5" y2="488.5"/>
</g>
<g stroke="#000" stroke-width="1" shape-rendering="crispEdges"><line x1="84" x2="1384" y1="658.5" y2="658.5"/>
<line x1="183.5" x2="183.5" y1="658.5" y2="663.5"/>
<line x1="315.5" x2="315.5" y1="658.5" y2="663.5"/>
<line x1="447.5" x2="447.5" y1="658.5" y2="663.5"/>
<line x1="579.5" x2="579.5" y1="658.5" y2="663.5"/>
<line x1="711.5" x2="711.5" y1="658.5" y2="663.5"/>
<line x1="843.5" x2="843.5" y1="658.5" y2="663.5"/>
<line x1="975.5" x2="975.5" y1="658.5" y2="663.5"/>
<line x1="1107.5" x2="1107.5" y1="658.5" y2="663.5"/>
<line x1="1239.5" x2="1239.5" y1="658.5" y2="663.5"/>
<line x1="1371.5" x2="1371.5" y1="658.5" y2="663.5"/>
</g>
<g font-size="12" fill="#000" text-anchor="end">
<text x="75.7" y="662.1" textLength="6.75" lengthAdjust="spacingAndGlyphs">0</text>
<text x="75.7" y="619.6" textLength="30.39" lengthAdjust="spacingAndGlyphs">2,000</text>
<text x="75.7" y="577.1" textLength="30.39" lengthAdjust="spacingAndGlyphs">4,000</text>
<text x="75.7" y="534.6" textLength="30.39" lengthAdjust="spacingAndGlyphs">6,000</text>
<text x="75.7" y="492.1" textLength="30.39" lengthAdjust="spacingAndGlyphs">8,000</text>
</g>
<g font-size="12" fill="#000" text-anchor="middle">
<text x="183.6" y="675.9" textLength="68.86" lengthAdjust="spacingAndGlyphs">12:38:00 PM</text>
<text x="315.6" y="675.9" textLength="68.86" lengthAdjust="spacingAndGlyphs">12:39:00 PM</text>
<text x="447.6" y="675.9" textLength="68.86" lengthAdjust="spacingAndGlyphs">12:40:00 PM</text>
<text x="579.6" y="675.9" textLength="68.86" lengthAdjust="spacingAndGlyphs">12:41:00 PM</text>
<text x="711.6" y="675.9" textLength="68.86" lengthAdjust="spacingAndGlyphs">12:42:00 PM</text>
<text x="843.6" y="675.9" textLength="68.86" lengthAdjust="spacingAndGlyphs">12:43:00 PM</text>
<text x="975.6" y="675.9" textLength="68.86" lengthAdjust="spacingAndGlyphs">12:44:00 PM</text>
<text x="1107.6" y="675.9" textLength="68.86" lengthAdjust="spacingAndGlyphs">12:45:00 PM</text>
<text x="1239.6" y="675.9" textLength="68.86" lengthAdjust="spacingAndGlyphs">12:46:00 PM</text>
<text x="1371.6" y="675.9" textLength="68.86" lengthAdjust="spacingAndGlyphs">12:47:00 PM</text>
</g>
<polyline fill="none" stroke="#ff9f00" stroke-width="2" stroke-linejoin="bevel" points="83.8,656.7 94.9,657.6 106.0,658.0 116.8,658.0 127.9,658.0 139.0,658.0 149.8,658.0 160.9,658.0 172.0,658.0 183.1,657.8 194.1,646.1 205.0,634.6 216.1,628.2 226.9,626.1 238.0,619.8 248.9,613.4 260.0,615.5 270.8,611.2 281.9,611.2 293.0,613.4 304.0,617.6 314.9,615.5 326.0,596.4 337.1,602.8 347.9,613.4 359.0,602.8 370.0,602.8 381.0,600.6 391.9,598.5 402.9,596.4 414.0,592.1 424.9,592.1 436.0,592.1 447.0,590.0 457.9,585.8 469.0,585.8 480.0,594.2 491.1,594.2 502.0,594.2 513.1,596.4 523.9,596.4 535.0,600.6 546.1,596.4 557.1,590.0 568.0,587.9 578.9,592.1 589.9,585.8 602.9,587.9 614.1,600.6 625.2,596.4 636.1,592.1 647.2,590.0 658.3,592.1 669.1,590.0 680.2,585.8 691.1,583.6 702.2,577.2 713.2,581.5 724.3,587.9 735.2,587.9 746.3,587.9 757.1,570.9 768.2,566.6 779.1,568.8 790.1,568.8 801.2,568.8 812.1,568.8 823.1,573.0 834.2,573.0 845.1,568.8 856.4,566.6 867.2,560.2 878.3,556.0 889.4,556.0 900.2,558.1 911.3,566.6 922.2,562.4 933.3,560.2 944.1,562.4 955.1,560.2 966.3,560.2 977.2,562.4 988.3,556.0 999.3,549.6 1010.2,551.8 1021.3,556.0 1032.1,556.0 1043.2,556.0 1054.3,551.8 1065.4,547.5 1076.4,558.1 1087.5,568.8 1098.4,562.4 1109.3,558.1 1120.3,553.9 1131.2,551.8 1142.3,551.8 1153.1,551.8 1164.3,551.8 1175.3,551.8 1186.4,543.2 1197.4,541.1 1208.4,545.4 1219.4,553.9 1230.2,558.1 1241.2,558.1 1252.2,562.4 1263.3,560.2 1274.1,556.0 1285.2,556.0 1296.3,562.4 1307.4,558.1 1318.4,556.0 1329.5,553.9 1340.6,549.6 1351.4,539.0 1362.3,539.0 1373.4,549.6"/>
<g fill="#fff" stroke="#ff9f00" stroke-width="1.8">
<circle cx="83.8" cy="656.7" r="1.9"/><circle cx="94.9" cy="657.6" r="1.9"/><circle cx="106.0" cy="658.0" r="1.9"/><circle cx="116.8" cy="658.0" r="1.9"/><circle cx="127.9" cy="658.0" r="1.9"/><circle cx="139.0" cy="658.0" r="1.9"/><circle cx="149.8" cy="658.0" r="1.9"/><circle cx="160.9" cy="658.0" r="1.9"/><circle cx="172.0" cy="658.0" r="1.9"/><circle cx="183.1" cy="657.8" r="1.9"/><circle cx="194.1" cy="646.1" r="1.9"/><circle cx="205.0" cy="634.6" r="1.9"/><circle cx="216.1" cy="628.2" r="1.9"/><circle cx="226.9" cy="626.1" r="1.9"/><circle cx="238.0" cy="619.8" r="1.9"/><circle cx="248.9" cy="613.4" r="1.9"/><circle cx="260.0" cy="615.5" r="1.9"/><circle cx="270.8" cy="611.2" r="1.9"/><circle cx="281.9" cy="611.2" r="1.9"/><circle cx="293.0" cy="613.4" r="1.9"/><circle cx="304.0" cy="617.6" r="1.9"/><circle cx="314.9" cy="615.5" r="1.9"/><circle cx="326.0" cy="596.4" r="1.9"/><circle cx="337.1" cy="602.8" r="1.9"/><circle cx="347.9" cy="613.4" r="1.9"/><circle cx="359.0" cy="602.8" r="1.9"/><circle cx="370.0" cy="602.8" r="1.9"/><circle cx="381.0" cy="600.6" r="1.9"/><circle cx="391.9" cy="598.5" r="1.9"/><circle cx="402.9" cy="596.4" r="1.9"/><circle cx="414.0" cy="592.1" r="1.9"/><circle cx="424.9" cy="592.1" r="1.9"/><circle cx="436.0" cy="592.1" r="1.9"/><circle cx="447.0" cy="590.0" r="1.9"/><circle cx="457.9" cy="585.8" r="1.9"/><circle cx="469.0" cy="585.8" r="1.9"/><circle cx="480.0" cy="594.2" r="1.9"/><circle cx="491.1" cy="594.2" r="1.9"/><circle cx="502.0" cy="594.2" r="1.9"/><circle cx="513.1" cy="596.4" r="1.9"/><circle cx="523.9" cy="596.4" r="1.9"/><circle cx="535.0" cy="600.6" r="1.9"/><circle cx="546.1" cy="596.4" r="1.9"/><circle cx="557.1" cy="590.0" r="1.9"/><circle cx="568.0" cy="587.9" r="1.9"/><circle cx="578.9" cy="592.1" r="1.9"/><circle cx="589.9" cy="585.8" r="1.9"/><circle cx="602.9" cy="587.9" r="1.9"/><circle cx="614.1" cy="600.6" r="1.9"/><circle cx="625.2" cy="596.4" r="1.9"/><circle cx="636.1" cy="592.1" r="1.9"/><circle cx="647.2" cy="590.0" r="1.9"/><circle cx="658.3" cy="592.1" r="1.9"/><circle cx="669.1" cy="590.0" r="1.9"/><circle cx="680.2" cy="585.8" r="1.9"/><circle cx="691.1" cy="583.6" r="1.9"/><circle cx="702.2" cy="577.2" r="1.9"/><circle cx="713.2" cy="581.5" r="1.9"/><circle cx="724.3" cy="587.9" r="1.9"/><circle cx="735.2" cy="587.9" r="1.9"/><circle cx="746.3" cy="587.9" r="1.9"/><circle cx="757.1" cy="570.9" r="1.9"/><circle cx="768.2" cy="566.6" r="1.9"/><circle cx="779.1" cy="568.8" r="1.9"/><circle cx="790.1" cy="568.8" r="1.9"/><circle cx="801.2" cy="568.8" r="1.9"/><circle cx="812.1" cy="568.8" r="1.9"/><circle cx="823.1" cy="573.0" r="1.9"/><circle cx="834.2" cy="573.0" r="1.9"/><circle cx="845.1" cy="568.8" r="1.9"/><circle cx="856.4" cy="566.6" r="1.9"/><circle cx="867.2" cy="560.2" r="1.9"/><circle cx="878.3" cy="556.0" r="1.9"/><circle cx="889.4" cy="556.0" r="1.9"/><circle cx="900.2" cy="558.1" r="1.9"/><circle cx="911.3" cy="566.6" r="1.9"/><circle cx="922.2" cy="562.4" r="1.9"/><circle cx="933.3" cy="560.2" r="1.9"/><circle cx="944.1" cy="562.4" r="1.9"/><circle cx="955.1" cy="560.2" r="1.9"/><circle cx="966.3" cy="560.2" r="1.9"/><circle cx="977.2" cy="562.4" r="1.9"/><circle cx="988.3" cy="556.0" r="1.9"/><circle cx="999.3" cy="549.6" r="1.9"/><circle cx="1010.2" cy="551.8" r="1.9"/><circle cx="1021.3" cy="556.0" r="1.9"/><circle cx="1032.1" cy="556.0" r="1.9"/><circle cx="1043.2" cy="556.0" r="1.9"/><circle cx="1054.3" cy="551.8" r="1.9"/><circle cx="1065.4" cy="547.5" r="1.9"/><circle cx="1076.4" cy="558.1" r="1.9"/><circle cx="1087.5" cy="568.8" r="1.9"/><circle cx="1098.4" cy="562.4" r="1.9"/><circle cx="1109.3" cy="558.1" r="1.9"/><circle cx="1120.3" cy="553.9" r="1.9"/><circle cx="1131.2" cy="551.8" r="1.9"/><circle cx="1142.3" cy="551.8" r="1.9"/><circle cx="1153.1" cy="551.8" r="1.9"/><circle cx="1164.3" cy="551.8" r="1.9"/><circle cx="1175.3" cy="551.8" r="1.9"/><circle cx="1186.4" cy="543.2" r="1.9"/><circle cx="1197.4" cy="541.1" r="1.9"/><circle cx="1208.4" cy="545.4" r="1.9"/><circle cx="1219.4" cy="553.9" r="1.9"/><circle cx="1230.2" cy="558.1" r="1.9"/><circle cx="1241.2" cy="558.1" r="1.9"/><circle cx="1252.2" cy="562.4" r="1.9"/><circle cx="1263.3" cy="560.2" r="1.9"/><circle cx="1274.1" cy="556.0" r="1.9"/><circle cx="1285.2" cy="556.0" r="1.9"/><circle cx="1296.3" cy="562.4" r="1.9"/><circle cx="1307.4" cy="558.1" r="1.9"/><circle cx="1318.4" cy="556.0" r="1.9"/><circle cx="1329.5" cy="553.9" r="1.9"/><circle cx="1340.6" cy="549.6" r="1.9"/><circle cx="1351.4" cy="539.0" r="1.9"/><circle cx="1362.3" cy="539.0" r="1.9"/><circle cx="1373.4" cy="549.6" r="1.9"/>
</g>
<polyline fill="none" stroke="#9966cc" stroke-width="2" stroke-linejoin="bevel" points="83.8,645.9 94.9,646.3 106.0,656.3 116.8,657.0 127.9,656.8 139.0,657.2 149.8,657.2 160.9,657.2 172.0,657.0 183.1,644.3 194.1,630.4 205.0,617.6 216.1,607.0 226.9,604.9 238.0,594.2 248.9,587.9 260.0,590.0 270.8,587.9 281.9,585.8 293.0,585.8 304.0,594.2 314.9,585.8 326.0,568.8 337.1,570.9 347.9,585.8 359.0,577.2 370.0,577.2 381.0,573.0 391.9,573.0 402.9,570.9 414.0,564.5 424.9,564.5 436.0,562.4 447.0,562.4 457.9,556.0 469.0,556.0 480.0,560.2 491.1,564.5 502.0,564.5 513.1,568.8 523.9,570.9 535.0,573.0 546.1,568.8 557.1,558.1 568.0,558.1 578.9,562.4 589.9,556.0 602.9,556.0 614.1,573.0 625.2,570.9 636.1,564.5 647.2,560.2 658.3,564.5 669.1,560.2 680.2,556.0 691.1,553.9 702.2,547.5 713.2,547.5 724.3,556.0 735.2,556.0 746.3,556.0 757.1,539.0 768.2,532.6 779.1,534.8 790.1,534.8 801.2,534.8 812.1,536.9 823.1,539.0 834.2,539.0 845.1,539.0 856.4,536.9 867.2,526.2 878.3,522.0 889.4,519.9 900.2,522.0 911.3,530.5 922.2,528.4 933.3,526.2 944.1,528.4 955.1,524.1 966.3,524.1 977.2,526.2 988.3,517.8 999.3,513.5 1010.2,513.5 1021.3,517.8 1032.1,522.0 1043.2,519.9 1054.3,515.6 1065.4,511.4 1076.4,513.5 1087.5,532.6 1098.4,528.4 1109.3,522.0 1120.3,517.8 1131.2,515.6 1142.3,515.6 1153.1,515.6 1164.3,515.6 1175.3,515.6 1186.4,507.1 1197.4,505.0 1208.4,505.0 1219.4,511.4 1230.2,522.0 1241.2,524.1 1252.2,526.2 1263.3,526.2 1274.1,519.9 1285.2,519.9 1296.3,524.1 1307.4,522.0 1318.4,517.8 1329.5,515.6 1340.6,513.5 1351.4,500.8 1362.3,500.8 1373.4,505.0"/>
<g fill="#fff" stroke="#9966cc" stroke-width="1.8">
<circle cx="83.8" cy="645.9" r="1.9"/><circle cx="94.9" cy="646.3" r="1.9"/><circle cx="106.0" cy="656.3" r="1.9"/><circle cx="116.8" cy="657.0" r="1.9"/><circle cx="127.9" cy="656.8" r="1.9"/><circle cx="139.0" cy="657.2" r="1.9"/><circle cx="149.8" cy="657.2" r="1.9"/><circle cx="160.9" cy="657.2" r="1.9"/><circle cx="172.0" cy="657.0" r="1.9"/><circle cx="183.1" cy="644.3" r="1.9"/><circle cx="194.1" cy="630.4" r="1.9"/><circle cx="205.0" cy="617.6" r="1.9"/><circle cx="216.1" cy="607.0" r="1.9"/><circle cx="226.9" cy="604.9" r="1.9"/><circle cx="238.0" cy="594.2" r="1.9"/><circle cx="248.9" cy="587.9" r="1.9"/><circle cx="260.0" cy="590.0" r="1.9"/><circle cx="270.8" cy="587.9" r="1.9"/><circle cx="281.9" cy="585.8" r="1.9"/><circle cx="293.0" cy="585.8" r="1.9"/><circle cx="304.0" cy="594.2" r="1.9"/><circle cx="314.9" cy="585.8" r="1.9"/><circle cx="326.0" cy="568.8" r="1.9"/><circle cx="337.1" cy="570.9" r="1.9"/><circle cx="347.9" cy="585.8" r="1.9"/><circle cx="359.0" cy="577.2" r="1.9"/><circle cx="370.0" cy="577.2" r="1.9"/><circle cx="381.0" cy="573.0" r="1.9"/><circle cx="391.9" cy="573.0" r="1.9"/><circle cx="402.9" cy="570.9" r="1.9"/><circle cx="414.0" cy="564.5" r="1.9"/><circle cx="424.9" cy="564.5" r="1.9"/><circle cx="436.0" cy="562.4" r="1.9"/><circle cx="447.0" cy="562.4" r="1.9"/><circle cx="457.9" cy="556.0" r="1.9"/><circle cx="469.0" cy="556.0" r="1.9"/><circle cx="480.0" cy="560.2" r="1.9"/><circle cx="491.1" cy="564.5" r="1.9"/><circle cx="502.0" cy="564.5" r="1.9"/><circle cx="513.1" cy="568.8" r="1.9"/><circle cx="523.9" cy="570.9" r="1.9"/><circle cx="535.0" cy="573.0" r="1.9"/><circle cx="546.1" cy="568.8" r="1.9"/><circle cx="557.1" cy="558.1" r="1.9"/><circle cx="568.0" cy="558.1" r="1.9"/><circle cx="578.9" cy="562.4" r="1.9"/><circle cx="589.9" cy="556.0" r="1.9"/><circle cx="602.9" cy="556.0" r="1.9"/><circle cx="614.1" cy="573.0" r="1.9"/><circle cx="625.2" cy="570.9" r="1.9"/><circle cx="636.1" cy="564.5" r="1.9"/><circle cx="647.2" cy="560.2" r="1.9"/><circle cx="658.3" cy="564.5" r="1.9"/><circle cx="669.1" cy="560.2" r="1.9"/><circle cx="680.2" cy="556.0" r="1.9"/><circle cx="691.1" cy="553.9" r="1.9"/><circle cx="702.2" cy="547.5" r="1.9"/><circle cx="713.2" cy="547.5" r="1.9"/><circle cx="724.3" cy="556.0" r="1.9"/><circle cx="735.2" cy="556.0" r="1.9"/><circle cx="746.3" cy="556.0" r="1.9"/><circle cx="757.1" cy="539.0" r="1.9"/><circle cx="768.2" cy="532.6" r="1.9"/><circle cx="779.1" cy="534.8" r="1.9"/><circle cx="790.1" cy="534.8" r="1.9"/><circle cx="801.2" cy="534.8" r="1.9"/><circle cx="812.1" cy="536.9" r="1.9"/><circle cx="823.1" cy="539.0" r="1.9"/><circle cx="834.2" cy="539.0" r="1.9"/><circle cx="845.1" cy="539.0" r="1.9"/><circle cx="856.4" cy="536.9" r="1.9"/><circle cx="867.2" cy="526.2" r="1.9"/><circle cx="878.3" cy="522.0" r="1.9"/><circle cx="889.4" cy="519.9" r="1.9"/><circle cx="900.2" cy="522.0" r="1.9"/><circle cx="911.3" cy="530.5" r="1.9"/><circle cx="922.2" cy="528.4" r="1.9"/><circle cx="933.3" cy="526.2" r="1.9"/><circle cx="944.1" cy="528.4" r="1.9"/><circle cx="955.1" cy="524.1" r="1.9"/><circle cx="966.3" cy="524.1" r="1.9"/><circle cx="977.2" cy="526.2" r="1.9"/><circle cx="988.3" cy="517.8" r="1.9"/><circle cx="999.3" cy="513.5" r="1.9"/><circle cx="1010.2" cy="513.5" r="1.9"/><circle cx="1021.3" cy="517.8" r="1.9"/><circle cx="1032.1" cy="522.0" r="1.9"/><circle cx="1043.2" cy="519.9" r="1.9"/><circle cx="1054.3" cy="515.6" r="1.9"/><circle cx="1065.4" cy="511.4" r="1.9"/><circle cx="1076.4" cy="513.5" r="1.9"/><circle cx="1087.5" cy="532.6" r="1.9"/><circle cx="1098.4" cy="528.4" r="1.9"/><circle cx="1109.3" cy="522.0" r="1.9"/><circle cx="1120.3" cy="517.8" r="1.9"/><circle cx="1131.2" cy="515.6" r="1.9"/><circle cx="1142.3" cy="515.6" r="1.9"/><circle cx="1153.1" cy="515.6" r="1.9"/><circle cx="1164.3" cy="515.6" r="1.9"/><circle cx="1175.3" cy="515.6" r="1.9"/><circle cx="1186.4" cy="507.1" r="1.9"/><circle cx="1197.4" cy="505.0" r="1.9"/><circle cx="1208.4" cy="505.0" r="1.9"/><circle cx="1219.4" cy="511.4" r="1.9"/><circle cx="1230.2" cy="522.0" r="1.9"/><circle cx="1241.2" cy="524.1" r="1.9"/><circle cx="1252.2" cy="526.2" r="1.9"/><circle cx="1263.3" cy="526.2" r="1.9"/><circle cx="1274.1" cy="519.9" r="1.9"/><circle cx="1285.2" cy="519.9" r="1.9"/><circle cx="1296.3" cy="524.1" r="1.9"/><circle cx="1307.4" cy="522.0" r="1.9"/><circle cx="1318.4" cy="517.8" r="1.9"/><circle cx="1329.5" cy="515.6" r="1.9"/><circle cx="1340.6" cy="513.5" r="1.9"/><circle cx="1351.4" cy="500.8" r="1.9"/><circle cx="1362.3" cy="500.8" r="1.9"/><circle cx="1373.4" cy="505.0" r="1.9"/>
</g>
<clipPath id="c428"><rect x="87.5" y="691" width="169.10000000000002" height="29"/></clipPath>
<clipPath id="c428b"><rect x="87.5" y="691" width="1298.5" height="29" rx="3"/></clipPath>
<g clip-path="url(#c428b)"><polygon points="87.5,720 87.5,714.4 98.3,714.5 109.1,714.6 120.0,714.6 130.8,714.6 141.6,714.6 152.4,714.6 163.2,714.6 174.1,714.6 184.9,714.5 195.7,712.7 206.5,711.0 217.3,710.0 228.2,709.7 239.0,708.7 249.8,707.8 260.6,708.1 271.5,707.4 282.3,707.4 293.1,707.8 303.9,708.4 314.7,708.1 325.6,705.2 336.4,706.1 347.2,707.8 358.0,706.1 368.8,706.1 379.7,705.8 390.5,705.5 401.3,705.2 412.1,704.5 422.9,704.5 433.8,704.5 444.6,704.2 455.4,703.6 466.2,703.6 477.1,704.9 487.9,704.9 498.7,704.9 509.5,705.2 520.3,705.2 531.2,705.8 542.0,705.2 552.8,704.2 563.6,703.9 574.4,704.5 585.3,703.6 596.1,703.9 606.9,705.8 617.7,705.2 628.5,704.5 639.4,704.2 650.2,704.5 661.0,704.2 671.8,703.6 682.6,703.2 693.5,702.3 704.3,702.9 715.1,703.9 725.9,703.9 736.8,703.9 747.6,701.3 758.4,700.6 769.2,701.0 780.0,701.0 790.9,701.0 801.7,701.0 812.5,701.6 823.3,701.6 834.1,701.0 845.0,700.6 855.8,699.7 866.6,699.0 877.4,699.0 888.2,699.4 899.1,700.6 909.9,700.0 920.7,699.7 931.5,700.0 942.3,699.7 953.2,699.7 964.0,700.0 974.8,699.0 985.6,698.1 996.5,698.4 1007.3,699.0 1018.1,699.0 1028.9,699.0 1039.7,698.4 1050.6,697.7 1061.4,699.4 1072.2,701.0 1083.0,700.0 1093.8,699.4 1104.7,698.7 1115.5,698.4 1126.3,698.4 1137.1,698.4 1147.9,698.4 1158.8,698.4 1169.6,697.1 1180.4,696.8 1191.2,697.4 1202.0,698.7 1212.9,699.4 1223.7,699.4 1234.5,700.0 1245.3,699.7 1256.2,699.0 1267.0,699.0 1277.8,700.0 1288.6,699.4 1299.4,699.0 1310.3,698.7 1321.1,698.1 1331.9,696.4 1342.7,696.4 1353.5,698.1 1364.4,698.1 1375.2,698.1 1386.0,714.6 1386.0,720" fill="#d2dbee" fill-opacity="0.2"/><polyline points="87.5,714.4 98.3,714.5 109.1,714.6 120.0,714.6 130.8,714.6 141.6,714.6 152.4,714.6 163.2,714.6 174.1,714.6 184.9,714.5 195.7,712.7 206.5,711.0 217.3,710.0 228.2,709.7 239.0,708.7 249.8,707.8 260.6,708.1 271.5,707.4 282.3,707.4 293.1,707.8 303.9,708.4 314.7,708.1 325.6,705.2 336.4,706.1 347.2,707.8 358.0,706.1 368.8,706.1 379.7,705.8 390.5,705.5 401.3,705.2 412.1,704.5 422.9,704.5 433.8,704.5 444.6,704.2 455.4,703.6 466.2,703.6 477.1,704.9 487.9,704.9 498.7,704.9 509.5,705.2 520.3,705.2 531.2,705.8 542.0,705.2 552.8,704.2 563.6,703.9 574.4,704.5 585.3,703.6 596.1,703.9 606.9,705.8 617.7,705.2 628.5,704.5 639.4,704.2 650.2,704.5 661.0,704.2 671.8,703.6 682.6,703.2 693.5,702.3 704.3,702.9 715.1,703.9 725.9,703.9 736.8,703.9 747.6,701.3 758.4,700.6 769.2,701.0 780.0,701.0 790.9,701.0 801.7,701.0 812.5,701.6 823.3,701.6 834.1,701.0 845.0,700.6 855.8,699.7 866.6,699.0 877.4,699.0 888.2,699.4 899.1,700.6 909.9,700.0 920.7,699.7 931.5,700.0 942.3,699.7 953.2,699.7 964.0,700.0 974.8,699.0 985.6,698.1 996.5,698.4 1007.3,699.0 1018.1,699.0 1028.9,699.0 1039.7,698.4 1050.6,697.7 1061.4,699.4 1072.2,701.0 1083.0,700.0 1093.8,699.4 1104.7,698.7 1115.5,698.4 1126.3,698.4 1137.1,698.4 1147.9,698.4 1158.8,698.4 1169.6,697.1 1180.4,696.8 1191.2,697.4 1202.0,698.7 1212.9,699.4 1223.7,699.4 1234.5,700.0 1245.3,699.7 1256.2,699.0 1267.0,699.0 1277.8,700.0 1288.6,699.4 1299.4,699.0 1310.3,698.7 1321.1,698.1 1331.9,696.4 1342.7,696.4 1353.5,698.1 1364.4,698.1 1375.2,698.1 1386.0,714.6" fill="none" stroke="#d2dbee" stroke-width="0.7"/></g>
<rect x="87.5" y="691" width="1298.5" height="29" rx="3" fill="none" stroke="#d2dbee"/>
<g clip-path="url(#c428)"><polygon points="87.5,720 87.5,714.4 98.3,714.5 109.1,714.6 120.0,714.6 130.8,714.6 141.6,714.6 152.4,714.6 163.2,714.6 174.1,714.6 184.9,714.5 195.7,712.7 206.5,711.0 217.3,710.0 228.2,709.7 239.0,708.7 249.8,707.8 260.6,708.1 271.5,707.4 282.3,707.4 293.1,707.8 303.9,708.4 314.7,708.1 325.6,705.2 336.4,706.1 347.2,707.8 358.0,706.1 368.8,706.1 379.7,705.8 390.5,705.5 401.3,705.2 412.1,704.5 422.9,704.5 433.8,704.5 444.6,704.2 455.4,703.6 466.2,703.6 477.1,704.9 487.9,704.9 498.7,704.9 509.5,705.2 520.3,705.2 531.2,705.8 542.0,705.2 552.8,704.2 563.6,703.9 574.4,704.5 585.3,703.6 596.1,703.9 606.9,705.8 617.7,705.2 628.5,704.5 639.4,704.2 650.2,704.5 661.0,704.2 671.8,703.6 682.6,703.2 693.5,702.3 704.3,702.9 715.1,703.9 725.9,703.9 736.8,703.9 747.6,701.3 758.4,700.6 769.2,701.0 780.0,701.0 790.9,701.0 801.7,701.0 812.5,701.6 823.3,701.6 834.1,701.0 845.0,700.6 855.8,699.7 866.6,699.0 877.4,699.0 888.2,699.4 899.1,700.6 909.9,700.0 920.7,699.7 931.5,700.0 942.3,699.7 953.2,699.7 964.0,700.0 974.8,699.0 985.6,698.1 996.5,698.4 1007.3,699.0 1018.1,699.0 1028.9,699.0 1039.7,698.4 1050.6,697.7 1061.4,699.4 1072.2,701.0 1083.0,700.0 1093.8,699.4 1104.7,698.7 1115.5,698.4 1126.3,698.4 1137.1,698.4 1147.9,698.4 1158.8,698.4 1169.6,697.1 1180.4,696.8 1191.2,697.4 1202.0,698.7 1212.9,699.4 1223.7,699.4 1234.5,700.0 1245.3,699.7 1256.2,699.0 1267.0,699.0 1277.8,700.0 1288.6,699.4 1299.4,699.0 1310.3,698.7 1321.1,698.1 1331.9,696.4 1342.7,696.4 1353.5,698.1 1364.4,698.1 1375.2,698.1 1386.0,714.6 1386.0,720" fill="#8fb0f7" fill-opacity="0.2"/><polyline points="87.5,714.4 98.3,714.5 109.1,714.6 120.0,714.6 130.8,714.6 141.6,714.6 152.4,714.6 163.2,714.6 174.1,714.6 184.9,714.5 195.7,712.7 206.5,711.0 217.3,710.0 228.2,709.7 239.0,708.7 249.8,707.8 260.6,708.1 271.5,707.4 282.3,707.4 293.1,707.8 303.9,708.4 314.7,708.1 325.6,705.2 336.4,706.1 347.2,707.8 358.0,706.1 368.8,706.1 379.7,705.8 390.5,705.5 401.3,705.2 412.1,704.5 422.9,704.5 433.8,704.5 444.6,704.2 455.4,703.6 466.2,703.6 477.1,704.9 487.9,704.9 498.7,704.9 509.5,705.2 520.3,705.2 531.2,705.8 542.0,705.2 552.8,704.2 563.6,703.9 574.4,704.5 585.3,703.6 596.1,703.9 606.9,705.8 617.7,705.2 628.5,704.5 639.4,704.2 650.2,704.5 661.0,704.2 671.8,703.6 682.6,703.2 693.5,702.3 704.3,702.9 715.1,703.9 725.9,703.9 736.8,703.9 747.6,701.3 758.4,700.6 769.2,701.0 780.0,701.0 790.9,701.0 801.7,701.0 812.5,701.6 823.3,701.6 834.1,701.0 845.0,700.6 855.8,699.7 866.6,699.0 877.4,699.0 888.2,699.4 899.1,700.6 909.9,700.0 920.7,699.7 931.5,700.0 942.3,699.7 953.2,699.7 964.0,700.0 974.8,699.0 985.6,698.1 996.5,698.4 1007.3,699.0 1018.1,699.0 1028.9,699.0 1039.7,698.4 1050.6,697.7 1061.4,699.4 1072.2,701.0 1083.0,700.0 1093.8,699.4 1104.7,698.7 1115.5,698.4 1126.3,698.4 1137.1,698.4 1147.9,698.4 1158.8,698.4 1169.6,697.1 1180.4,696.8 1191.2,697.4 1202.0,698.7 1212.9,699.4 1223.7,699.4 1234.5,700.0 1245.3,699.7 1256.2,699.0 1267.0,699.0 1277.8,700.0 1288.6,699.4 1299.4,699.0 1310.3,698.7 1321.1,698.1 1331.9,696.4 1342.7,696.4 1353.5,698.1 1364.4,698.1 1375.2,698.1 1386.0,714.6" fill="none" stroke="#8fb0f7" stroke-width="0.5"/></g>
<rect x="87.5" y="691" width="169.10000000000002" height="29" fill="rgb(135,175,255)" fill-opacity="0.2"/>
<path d="M87.0,691 v-5 a2,2 0 0 1 2,-2 h166.10000000000002 a2,2 0 0 1 2,2 v5 z" fill="#d2dbee" fill-opacity="0.7"/>
<g stroke="#fff" stroke-width="0.8" opacity="0.9"><line x1="170.55" x2="170.55" y1="686.5" y2="688.5"/><line x1="172.05" x2="172.05" y1="686.5" y2="688.5"/><line x1="173.55" x2="173.55" y1="686.5" y2="688.5"/></g>
<g stroke="#acb8d1" stroke-width="1"><line x1="87.5" x2="87.5" y1="691" y2="720.5"/><rect x="84.6" y="696.4" width="5.8" height="18.1" rx="1.45" fill="#fff"/></g>
<g stroke="#acb8d1" stroke-width="1"><line x1="256.6" x2="256.6" y1="691" y2="720.5"/><rect x="253.70000000000002" y="696.4" width="5.8" height="18.1" rx="1.45" fill="#fff"/></g>
</g>
<g id="chart-users">
<text x="29" y="747.6" font-size="18" font-weight="700" fill="#000" textLength="146.8" lengthAdjust="spacingAndGlyphs">Number of Users</text>
<circle cx="673.3" cy="764.8" r="7" fill="#0099ff"/>
<text x="691.30" y="769.1" font-size="12" fill="#000" textLength="92.10" lengthAdjust="spacingAndGlyphs">Number of Users</text>
<path d="M0,13.5h26.9 M13.5,26.9V0 M32.1,13.5H58V58H13.5 V32.1" fill="none" stroke="#3e98c5" stroke-width="3.867" transform="translate(1340.60,735.50) scale(0.2586)"/>
<path d="M22,1.4L9.9,13.5l12.3,12.3 M10.3,13.5H54.9v44.6 H10.3v-26" fill="none" stroke="#666" stroke-width="3.780" transform="translate(1365.93,735.13) scale(0.2646)"/>
<path d="M4.7,22.9L29.3,45.5L54.7,23.4M4.6,43.6L4.6,58L53.8,58L53.8,43.6M29.2,45.1L29.2,0" fill="none" stroke="#666" stroke-width="3.867" transform="translate(1392.23,735.50) scale(0.2586)"/>
<g stroke="#ddd" stroke-width="1" shape-rendering="crispEdges">
<line x1="84" x2="1384" y1="928.5" y2="928.5"/>
<line x1="84" x2="1384" y1="901.5" y2="901.5"/>
<line x1="84" x2="1384" y1="873.5" y2="873.5"/>
<line x1="84" x2="1384" y1="844.5" y2="844.5"/>
<line x1="84" x2="1384" y1="816.5" y2="816.5"/>
<line x1="84" x2="1384" y1="788.5" y2="788.5"/>
</g>
<g stroke="#000" stroke-width="1" shape-rendering="crispEdges"><line x1="84" x2="1384" y1="957.5" y2="957.5"/>
<line x1="183.5" x2="183.5" y1="957.5" y2="962.5"/>
<line x1="315.5" x2="315.5" y1="957.5" y2="962.5"/>
<line x1="447.5" x2="447.5" y1="957.5" y2="962.5"/>
<line x1="579.5" x2="579.5" y1="957.5" y2="962.5"/>
<line x1="711.5" x2="711.5" y1="957.5" y2="962.5"/>
<line x1="843.5" x2="843.5" y1="957.5" y2="962.5"/>
<line x1="975.5" x2="975.5" y1="957.5" y2="962.5"/>
<line x1="1107.5" x2="1107.5" y1="957.5" y2="962.5"/>
<line x1="1239.5" x2="1239.5" y1="957.5" y2="962.5"/>
<line x1="1371.5" x2="1371.5" y1="957.5" y2="962.5"/>
</g>
<g font-size="12" fill="#000" text-anchor="end">
<text x="75.7" y="961.1" textLength="6.75" lengthAdjust="spacingAndGlyphs">0</text>
<text x="75.7" y="932.6" textLength="30.39" lengthAdjust="spacingAndGlyphs">1,000</text>
<text x="75.7" y="905.1" textLength="30.39" lengthAdjust="spacingAndGlyphs">2,000</text>
<text x="75.7" y="877.1" textLength="30.39" lengthAdjust="spacingAndGlyphs">3,000</text>
<text x="75.7" y="848.4" textLength="30.39" lengthAdjust="spacingAndGlyphs">4,000</text>
<text x="75.7" y="820.4" textLength="30.39" lengthAdjust="spacingAndGlyphs">5,000</text>
<text x="75.7" y="792.3" textLength="30.39" lengthAdjust="spacingAndGlyphs">6,000</text>
</g>
<g font-size="12" fill="#000" text-anchor="middle">
<text x="183.6" y="974.9" textLength="68.86" lengthAdjust="spacingAndGlyphs">12:38:00 PM</text>
<text x="315.6" y="974.9" textLength="68.86" lengthAdjust="spacingAndGlyphs">12:39:00 PM</text>
<text x="447.6" y="974.9" textLength="68.86" lengthAdjust="spacingAndGlyphs">12:40:00 PM</text>
<text x="579.6" y="974.9" textLength="68.86" lengthAdjust="spacingAndGlyphs">12:41:00 PM</text>
<text x="711.6" y="974.9" textLength="68.86" lengthAdjust="spacingAndGlyphs">12:42:00 PM</text>
<text x="843.6" y="974.9" textLength="68.86" lengthAdjust="spacingAndGlyphs">12:43:00 PM</text>
<text x="975.6" y="974.9" textLength="68.86" lengthAdjust="spacingAndGlyphs">12:44:00 PM</text>
<text x="1107.6" y="974.9" textLength="68.86" lengthAdjust="spacingAndGlyphs">12:45:00 PM</text>
<text x="1239.6" y="974.9" textLength="68.86" lengthAdjust="spacingAndGlyphs">12:46:00 PM</text>
<text x="1371.6" y="974.9" textLength="68.86" lengthAdjust="spacingAndGlyphs">12:47:00 PM</text>
</g>
<polyline fill="none" stroke="#0099ff" stroke-width="2" stroke-linejoin="bevel" points="83.8,949.0 94.9,934.6 106.0,920.4 116.8,906.6 127.9,892.8 139.0,878.8 149.8,864.4 160.9,850.4 172.0,836.0 183.1,821.8 194.1,816.2 205.0,816.2 216.1,816.2 226.9,816.2 238.0,816.2 248.9,816.2 260.0,816.2 270.8,816.2 281.9,816.2 293.0,816.2 304.0,816.2 314.9,816.2 326.0,816.2 337.1,816.2 347.9,816.2 359.0,816.2 370.0,816.2 381.0,816.2 391.9,816.2 402.9,816.2 414.0,816.2 424.9,816.2 436.0,816.2 447.0,816.2 457.9,816.2 469.0,816.2 480.0,816.2 491.1,816.2 502.0,816.2 513.1,816.2 523.9,816.2 535.0,816.2 546.1,816.2 557.1,816.2 568.0,816.2 578.9,816.2 589.9,816.2 602.9,816.2 614.1,816.2 625.2,816.2 636.1,816.2 647.2,816.2 658.3,816.2 669.1,816.2 680.2,816.2 691.1,816.2 702.2,816.2 713.2,816.2 724.3,816.2 735.2,816.2 746.3,816.2 757.1,816.2 768.2,816.2 779.1,816.2 790.1,816.2 801.2,816.2 812.1,816.2 823.1,816.2 834.2,816.2 845.1,816.2 856.4,816.2 867.2,816.2 878.3,816.2 889.4,816.2 900.2,816.2 911.3,816.2 922.2,816.2 933.3,816.2 944.1,816.2 955.1,816.2 966.3,816.2 977.2,816.2 988.3,816.2 999.3,816.2 1010.2,816.2 1021.3,816.2 1032.1,816.2 1043.2,816.2 1054.3,816.2 1065.4,816.2 1076.4,816.2 1087.5,816.2 1098.4,816.2 1109.3,816.2 1120.3,816.2 1131.2,816.2 1142.3,816.2 1153.1,816.2 1164.3,816.2 1175.3,816.2 1186.4,816.2 1197.4,816.2 1208.4,816.2 1219.4,816.2 1230.2,816.2 1241.2,816.2 1252.2,816.2 1263.3,816.2 1274.1,816.2 1285.2,816.2 1296.3,816.2 1307.4,816.2 1318.4,816.2 1329.5,816.2 1340.6,816.2 1351.4,816.2 1362.3,816.2 1373.4,816.2"/>
<g fill="#fff" stroke="#0099ff" stroke-width="1.8">
<circle cx="83.8" cy="949.0" r="1.9"/><circle cx="94.9" cy="934.6" r="1.9"/><circle cx="106.0" cy="920.4" r="1.9"/><circle cx="116.8" cy="906.6" r="1.9"/><circle cx="127.9" cy="892.8" r="1.9"/><circle cx="139.0" cy="878.8" r="1.9"/><circle cx="149.8" cy="864.4" r="1.9"/><circle cx="160.9" cy="850.4" r="1.9"/><circle cx="172.0" cy="836.0" r="1.9"/><circle cx="183.1" cy="821.8" r="1.9"/><circle cx="194.1" cy="816.2" r="1.9"/><circle cx="205.0" cy="816.2" r="1.9"/><circle cx="216.1" cy="816.2" r="1.9"/><circle cx="226.9" cy="816.2" r="1.9"/><circle cx="238.0" cy="816.2" r="1.9"/><circle cx="248.9" cy="816.2" r="1.9"/><circle cx="260.0" cy="816.2" r="1.9"/><circle cx="270.8" cy="816.2" r="1.9"/><circle cx="281.9" cy="816.2" r="1.9"/><circle cx="293.0" cy="816.2" r="1.9"/><circle cx="304.0" cy="816.2" r="1.9"/><circle cx="314.9" cy="816.2" r="1.9"/><circle cx="326.0" cy="816.2" r="1.9"/><circle cx="337.1" cy="816.2" r="1.9"/><circle cx="347.9" cy="816.2" r="1.9"/><circle cx="359.0" cy="816.2" r="1.9"/><circle cx="370.0" cy="816.2" r="1.9"/><circle cx="381.0" cy="816.2" r="1.9"/><circle cx="391.9" cy="816.2" r="1.9"/><circle cx="402.9" cy="816.2" r="1.9"/><circle cx="414.0" cy="816.2" r="1.9"/><circle cx="424.9" cy="816.2" r="1.9"/><circle cx="436.0" cy="816.2" r="1.9"/><circle cx="447.0" cy="816.2" r="1.9"/><circle cx="457.9" cy="816.2" r="1.9"/><circle cx="469.0" cy="816.2" r="1.9"/><circle cx="480.0" cy="816.2" r="1.9"/><circle cx="491.1" cy="816.2" r="1.9"/><circle cx="502.0" cy="816.2" r="1.9"/><circle cx="513.1" cy="816.2" r="1.9"/><circle cx="523.9" cy="816.2" r="1.9"/><circle cx="535.0" cy="816.2" r="1.9"/><circle cx="546.1" cy="816.2" r="1.9"/><circle cx="557.1" cy="816.2" r="1.9"/><circle cx="568.0" cy="816.2" r="1.9"/><circle cx="578.9" cy="816.2" r="1.9"/><circle cx="589.9" cy="816.2" r="1.9"/><circle cx="602.9" cy="816.2" r="1.9"/><circle cx="614.1" cy="816.2" r="1.9"/><circle cx="625.2" cy="816.2" r="1.9"/><circle cx="636.1" cy="816.2" r="1.9"/><circle cx="647.2" cy="816.2" r="1.9"/><circle cx="658.3" cy="816.2" r="1.9"/><circle cx="669.1" cy="816.2" r="1.9"/><circle cx="680.2" cy="816.2" r="1.9"/><circle cx="691.1" cy="816.2" r="1.9"/><circle cx="702.2" cy="816.2" r="1.9"/><circle cx="713.2" cy="816.2" r="1.9"/><circle cx="724.3" cy="816.2" r="1.9"/><circle cx="735.2" cy="816.2" r="1.9"/><circle cx="746.3" cy="816.2" r="1.9"/><circle cx="757.1" cy="816.2" r="1.9"/><circle cx="768.2" cy="816.2" r="1.9"/><circle cx="779.1" cy="816.2" r="1.9"/><circle cx="790.1" cy="816.2" r="1.9"/><circle cx="801.2" cy="816.2" r="1.9"/><circle cx="812.1" cy="816.2" r="1.9"/><circle cx="823.1" cy="816.2" r="1.9"/><circle cx="834.2" cy="816.2" r="1.9"/><circle cx="845.1" cy="816.2" r="1.9"/><circle cx="856.4" cy="816.2" r="1.9"/><circle cx="867.2" cy="816.2" r="1.9"/><circle cx="878.3" cy="816.2" r="1.9"/><circle cx="889.4" cy="816.2" r="1.9"/><circle cx="900.2" cy="816.2" r="1.9"/><circle cx="911.3" cy="816.2" r="1.9"/><circle cx="922.2" cy="816.2" r="1.9"/><circle cx="933.3" cy="816.2" r="1.9"/><circle cx="944.1" cy="816.2" r="1.9"/><circle cx="955.1" cy="816.2" r="1.9"/><circle cx="966.3" cy="816.2" r="1.9"/><circle cx="977.2" cy="816.2" r="1.9"/><circle cx="988.3" cy="816.2" r="1.9"/><circle cx="999.3" cy="816.2" r="1.9"/><circle cx="1010.2" cy="816.2" r="1.9"/><circle cx="1021.3" cy="816.2" r="1.9"/><circle cx="1032.1" cy="816.2" r="1.9"/><circle cx="1043.2" cy="816.2" r="1.9"/><circle cx="1054.3" cy="816.2" r="1.9"/><circle cx="1065.4" cy="816.2" r="1.9"/><circle cx="1076.4" cy="816.2" r="1.9"/><circle cx="1087.5" cy="816.2" r="1.9"/><circle cx="1098.4" cy="816.2" r="1.9"/><circle cx="1109.3" cy="816.2" r="1.9"/><circle cx="1120.3" cy="816.2" r="1.9"/><circle cx="1131.2" cy="816.2" r="1.9"/><circle cx="1142.3" cy="816.2" r="1.9"/><circle cx="1153.1" cy="816.2" r="1.9"/><circle cx="1164.3" cy="816.2" r="1.9"/><circle cx="1175.3" cy="816.2" r="1.9"/><circle cx="1186.4" cy="816.2" r="1.9"/><circle cx="1197.4" cy="816.2" r="1.9"/><circle cx="1208.4" cy="816.2" r="1.9"/><circle cx="1219.4" cy="816.2" r="1.9"/><circle cx="1230.2" cy="816.2" r="1.9"/><circle cx="1241.2" cy="816.2" r="1.9"/><circle cx="1252.2" cy="816.2" r="1.9"/><circle cx="1263.3" cy="816.2" r="1.9"/><circle cx="1274.1" cy="816.2" r="1.9"/><circle cx="1285.2" cy="816.2" r="1.9"/><circle cx="1296.3" cy="816.2" r="1.9"/><circle cx="1307.4" cy="816.2" r="1.9"/><circle cx="1318.4" cy="816.2" r="1.9"/><circle cx="1329.5" cy="816.2" r="1.9"/><circle cx="1340.6" cy="816.2" r="1.9"/><circle cx="1351.4" cy="816.2" r="1.9"/><circle cx="1362.3" cy="816.2" r="1.9"/><circle cx="1373.4" cy="816.2" r="1.9"/>
</g>
<clipPath id="c728"><rect x="87.5" y="990" width="169.10000000000002" height="29"/></clipPath>
<clipPath id="c728b"><rect x="87.5" y="990" width="1298.5" height="29" rx="3"/></clipPath>
<g clip-path="url(#c728b)"><polygon points="87.5,1019 87.5,1012.5 98.3,1010.7 109.1,1008.9 120.0,1007.1 130.8,1005.3 141.6,1003.5 152.4,1001.6 163.2,999.8 174.1,998.0 184.9,996.2 195.7,995.4 206.5,995.4 217.3,995.4 228.2,995.4 239.0,995.4 249.8,995.4 260.6,995.4 271.5,995.4 282.3,995.4 293.1,995.4 303.9,995.4 314.7,995.4 325.6,995.4 336.4,995.4 347.2,995.4 358.0,995.4 368.8,995.4 379.7,995.4 390.5,995.4 401.3,995.4 412.1,995.4 422.9,995.4 433.8,995.4 444.6,995.4 455.4,995.4 466.2,995.4 477.1,995.4 487.9,995.4 498.7,995.4 509.5,995.4 520.3,995.4 531.2,995.4 542.0,995.4 552.8,995.4 563.6,995.4 574.4,995.4 585.3,995.4 596.1,995.4 606.9,995.4 617.7,995.4 628.5,995.4 639.4,995.4 650.2,995.4 661.0,995.4 671.8,995.4 682.6,995.4 693.5,995.4 704.3,995.4 715.1,995.4 725.9,995.4 736.8,995.4 747.6,995.4 758.4,995.4 769.2,995.4 780.0,995.4 790.9,995.4 801.7,995.4 812.5,995.4 823.3,995.4 834.1,995.4 845.0,995.4 855.8,995.4 866.6,995.4 877.4,995.4 888.2,995.4 899.1,995.4 909.9,995.4 920.7,995.4 931.5,995.4 942.3,995.4 953.2,995.4 964.0,995.4 974.8,995.4 985.6,995.4 996.5,995.4 1007.3,995.4 1018.1,995.4 1028.9,995.4 1039.7,995.4 1050.6,995.4 1061.4,995.4 1072.2,995.4 1083.0,995.4 1093.8,995.4 1104.7,995.4 1115.5,995.4 1126.3,995.4 1137.1,995.4 1147.9,995.4 1158.8,995.4 1169.6,995.4 1180.4,995.4 1191.2,995.4 1202.0,995.4 1212.9,995.4 1223.7,995.4 1234.5,995.4 1245.3,995.4 1256.2,995.4 1267.0,995.4 1277.8,995.4 1288.6,995.4 1299.4,995.4 1310.3,995.4 1321.1,995.4 1331.9,995.4 1342.7,995.4 1353.5,995.4 1364.4,995.4 1375.2,995.4 1386.0,1013.6 1386.0,1019" fill="#d2dbee" fill-opacity="0.2"/><polyline points="87.5,1012.5 98.3,1010.7 109.1,1008.9 120.0,1007.1 130.8,1005.3 141.6,1003.5 152.4,1001.6 163.2,999.8 174.1,998.0 184.9,996.2 195.7,995.4 206.5,995.4 217.3,995.4 228.2,995.4 239.0,995.4 249.8,995.4 260.6,995.4 271.5,995.4 282.3,995.4 293.1,995.4 303.9,995.4 314.7,995.4 325.6,995.4 336.4,995.4 347.2,995.4 358.0,995.4 368.8,995.4 379.7,995.4 390.5,995.4 401.3,995.4 412.1,995.4 422.9,995.4 433.8,995.4 444.6,995.4 455.4,995.4 466.2,995.4 477.1,995.4 487.9,995.4 498.7,995.4 509.5,995.4 520.3,995.4 531.2,995.4 542.0,995.4 552.8,995.4 563.6,995.4 574.4,995.4 585.3,995.4 596.1,995.4 606.9,995.4 617.7,995.4 628.5,995.4 639.4,995.4 650.2,995.4 661.0,995.4 671.8,995.4 682.6,995.4 693.5,995.4 704.3,995.4 715.1,995.4 725.9,995.4 736.8,995.4 747.6,995.4 758.4,995.4 769.2,995.4 780.0,995.4 790.9,995.4 801.7,995.4 812.5,995.4 823.3,995.4 834.1,995.4 845.0,995.4 855.8,995.4 866.6,995.4 877.4,995.4 888.2,995.4 899.1,995.4 909.9,995.4 920.7,995.4 931.5,995.4 942.3,995.4 953.2,995.4 964.0,995.4 974.8,995.4 985.6,995.4 996.5,995.4 1007.3,995.4 1018.1,995.4 1028.9,995.4 1039.7,995.4 1050.6,995.4 1061.4,995.4 1072.2,995.4 1083.0,995.4 1093.8,995.4 1104.7,995.4 1115.5,995.4 1126.3,995.4 1137.1,995.4 1147.9,995.4 1158.8,995.4 1169.6,995.4 1180.4,995.4 1191.2,995.4 1202.0,995.4 1212.9,995.4 1223.7,995.4 1234.5,995.4 1245.3,995.4 1256.2,995.4 1267.0,995.4 1277.8,995.4 1288.6,995.4 1299.4,995.4 1310.3,995.4 1321.1,995.4 1331.9,995.4 1342.7,995.4 1353.5,995.4 1364.4,995.4 1375.2,995.4 1386.0,1013.6" fill="none" stroke="#d2dbee" stroke-width="0.7"/></g>
<rect x="87.5" y="990" width="1298.5" height="29" rx="3" fill="none" stroke="#d2dbee"/>
<g clip-path="url(#c728)"><polygon points="87.5,1019 87.5,1012.5 98.3,1010.7 109.1,1008.9 120.0,1007.1 130.8,1005.3 141.6,1003.5 152.4,1001.6 163.2,999.8 174.1,998.0 184.9,996.2 195.7,995.4 206.5,995.4 217.3,995.4 228.2,995.4 239.0,995.4 249.8,995.4 260.6,995.4 271.5,995.4 282.3,995.4 293.1,995.4 303.9,995.4 314.7,995.4 325.6,995.4 336.4,995.4 347.2,995.4 358.0,995.4 368.8,995.4 379.7,995.4 390.5,995.4 401.3,995.4 412.1,995.4 422.9,995.4 433.8,995.4 444.6,995.4 455.4,995.4 466.2,995.4 477.1,995.4 487.9,995.4 498.7,995.4 509.5,995.4 520.3,995.4 531.2,995.4 542.0,995.4 552.8,995.4 563.6,995.4 574.4,995.4 585.3,995.4 596.1,995.4 606.9,995.4 617.7,995.4 628.5,995.4 639.4,995.4 650.2,995.4 661.0,995.4 671.8,995.4 682.6,995.4 693.5,995.4 704.3,995.4 715.1,995.4 725.9,995.4 736.8,995.4 747.6,995.4 758.4,995.4 769.2,995.4 780.0,995.4 790.9,995.4 801.7,995.4 812.5,995.4 823.3,995.4 834.1,995.4 845.0,995.4 855.8,995.4 866.6,995.4 877.4,995.4 888.2,995.4 899.1,995.4 909.9,995.4 920.7,995.4 931.5,995.4 942.3,995.4 953.2,995.4 964.0,995.4 974.8,995.4 985.6,995.4 996.5,995.4 1007.3,995.4 1018.1,995.4 1028.9,995.4 1039.7,995.4 1050.6,995.4 1061.4,995.4 1072.2,995.4 1083.0,995.4 1093.8,995.4 1104.7,995.4 1115.5,995.4 1126.3,995.4 1137.1,995.4 1147.9,995.4 1158.8,995.4 1169.6,995.4 1180.4,995.4 1191.2,995.4 1202.0,995.4 1212.9,995.4 1223.7,995.4 1234.5,995.4 1245.3,995.4 1256.2,995.4 1267.0,995.4 1277.8,995.4 1288.6,995.4 1299.4,995.4 1310.3,995.4 1321.1,995.4 1331.9,995.4 1342.7,995.4 1353.5,995.4 1364.4,995.4 1375.2,995.4 1386.0,1013.6 1386.0,1019" fill="#8fb0f7" fill-opacity="0.2"/><polyline points="87.5,1012.5 98.3,1010.7 109.1,1008.9 120.0,1007.1 130.8,1005.3 141.6,1003.5 152.4,1001.6 163.2,999.8 174.1,998.0 184.9,996.2 195.7,995.4 206.5,995.4 217.3,995.4 228.2,995.4 239.0,995.4 249.8,995.4 260.6,995.4 271.5,995.4 282.3,995.4 293.1,995.4 303.9,995.4 314.7,995.4 325.6,995.4 336.4,995.4 347.2,995.4 358.0,995.4 368.8,995.4 379.7,995.4 390.5,995.4 401.3,995.4 412.1,995.4 422.9,995.4 433.8,995.4 444.6,995.4 455.4,995.4 466.2,995.4 477.1,995.4 487.9,995.4 498.7,995.4 509.5,995.4 520.3,995.4 531.2,995.4 542.0,995.4 552.8,995.4 563.6,995.4 574.4,995.4 585.3,995.4 596.1,995.4 606.9,995.4 617.7,995.4 628.5,995.4 639.4,995.4 650.2,995.4 661.0,995.4 671.8,995.4 682.6,995.4 693.5,995.4 704.3,995.4 715.1,995.4 725.9,995.4 736.8,995.4 747.6,995.4 758.4,995.4 769.2,995.4 780.0,995.4 790.9,995.4 801.7,995.4 812.5,995.4 823.3,995.4 834.1,995.4 845.0,995.4 855.8,995.4 866.6,995.4 877.4,995.4 888.2,995.4 899.1,995.4 909.9,995.4 920.7,995.4 931.5,995.4 942.3,995.4 953.2,995.4 964.0,995.4 974.8,995.4 985.6,995.4 996.5,995.4 1007.3,995.4 1018.1,995.4 1028.9,995.4 1039.7,995.4 1050.6,995.4 1061.4,995.4 1072.2,995.4 1083.0,995.4 1093.8,995.4 1104.7,995.4 1115.5,995.4 1126.3,995.4 1137.1,995.4 1147.9,995.4 1158.8,995.4 1169.6,995.4 1180.4,995.4 1191.2,995.4 1202.0,995.4 1212.9,995.4 1223.7,995.4 1234.5,995.4 1245.3,995.4 1256.2,995.4 1267.0,995.4 1277.8,995.4 1288.6,995.4 1299.4,995.4 1310.3,995.4 1321.1,995.4 1331.9,995.4 1342.7,995.4 1353.5,995.4 1364.4,995.4 1375.2,995.4 1386.0,1013.6" fill="none" stroke="#8fb0f7" stroke-width="0.5"/></g>
<rect x="87.5" y="990" width="169.10000000000002" height="29" fill="rgb(135,175,255)" fill-opacity="0.2"/>
<path d="M87.0,990 v-5 a2,2 0 0 1 2,-2 h166.10000000000002 a2,2 0 0 1 2,2 v5 z" fill="#d2dbee" fill-opacity="0.7"/>
<g stroke="#fff" stroke-width="0.8" opacity="0.9"><line x1="170.55" x2="170.55" y1="985.5" y2="987.5"/><line x1="172.05" x2="172.05" y1="985.5" y2="987.5"/><line x1="173.55" x2="173.55" y1="985.5" y2="987.5"/></g>
<g stroke="#acb8d1" stroke-width="1"><line x1="87.5" x2="87.5" y1="990" y2="1019.5"/><rect x="84.6" y="995.4" width="5.8" height="18.1" rx="1.45" fill="#fff"/></g>
<g stroke="#acb8d1" stroke-width="1"><line x1="256.6" x2="256.6" y1="990" y2="1019.5"/><rect x="253.70000000000002" y="995.4" width="5.8" height="18.1" rx="1.45" fill="#fff"/></g>
</g>
</svg>
</main>
<footer class="gl"><span class="t" style="left:1381.10px;top:1040.25px;font-size:14px;font-weight:400;color:rgba(0,0,0,0.87);transform:scaleX(1.0067)">ABOUT</span></footer>
</body></html>
